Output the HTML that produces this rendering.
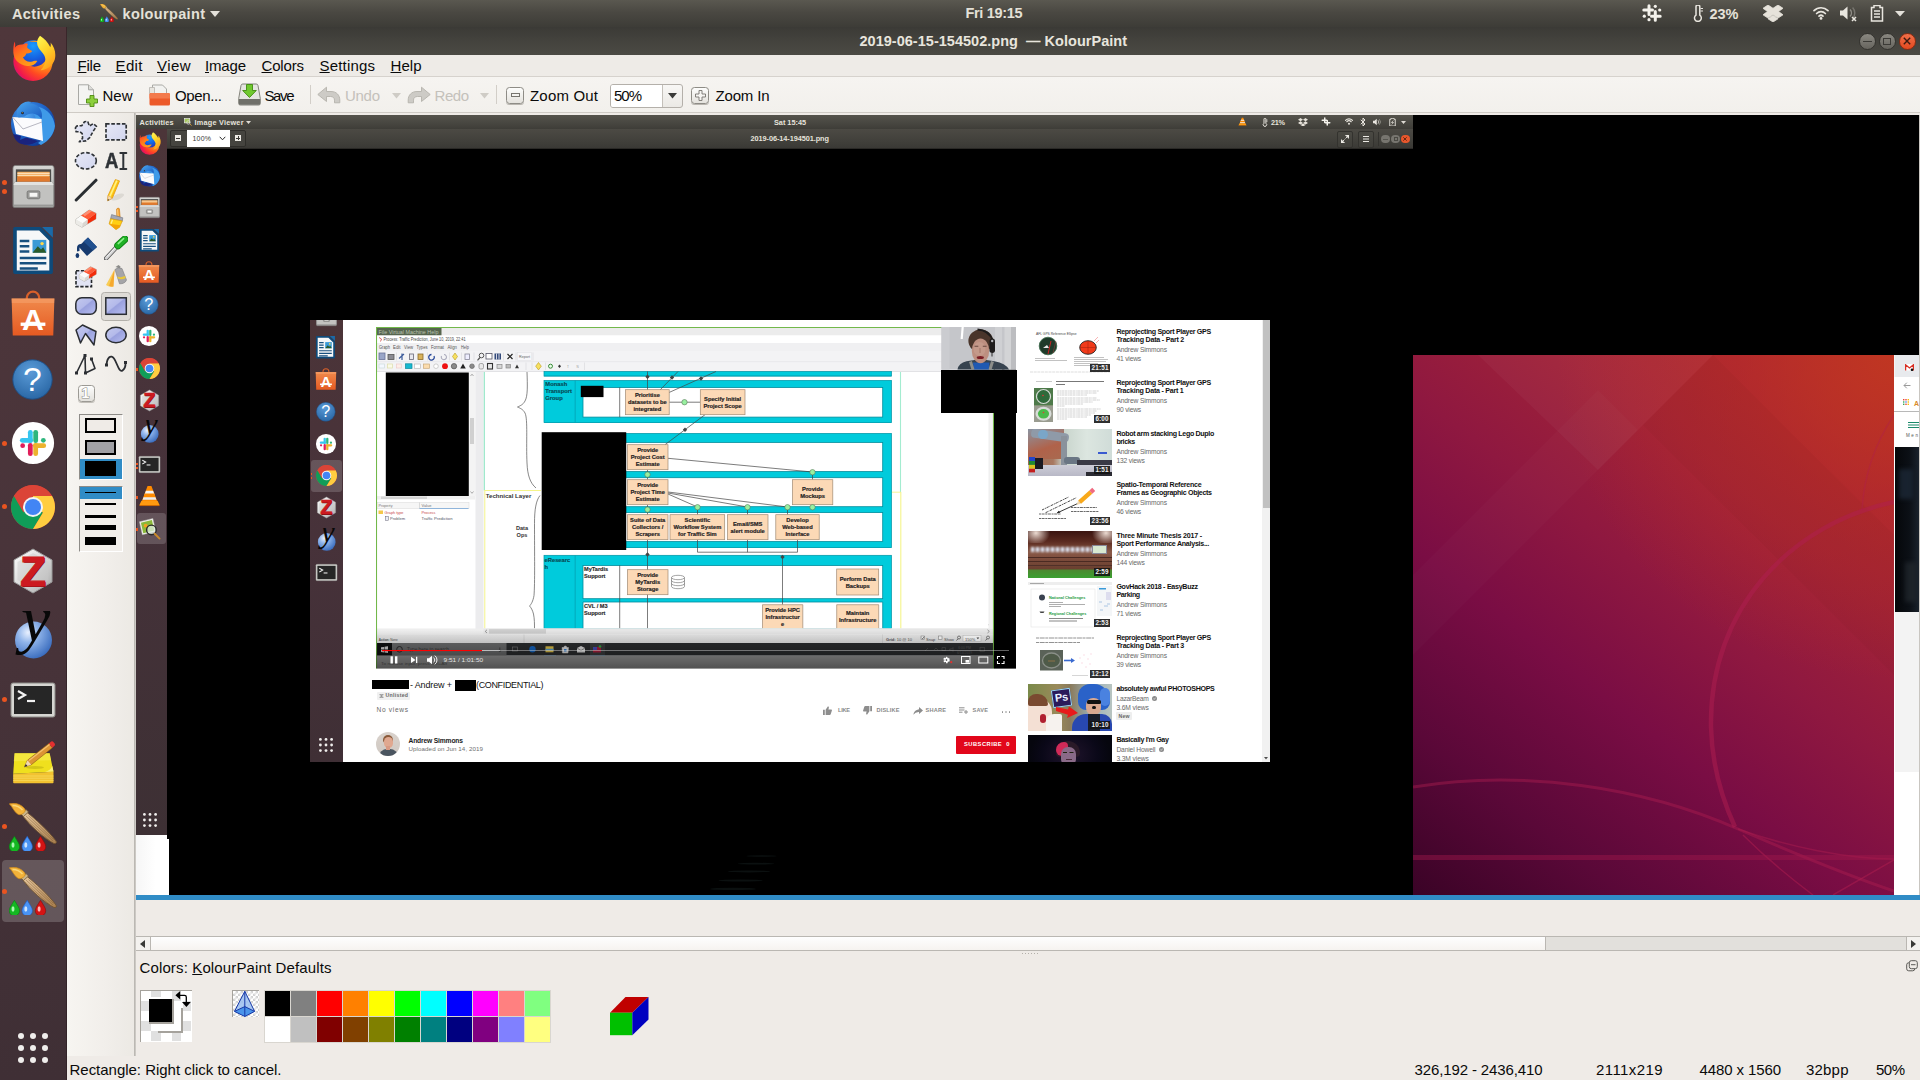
<!DOCTYPE html>
<html lang="en"><head><meta charset="utf-8"><title>2019-06-15-154502.png — KolourPaint</title>
<style>
html,body{margin:0;padding:0;width:1920px;height:1080px;overflow:hidden;background:#efebe7;font-family:"Liberation Sans",sans-serif;}
*{box-sizing:border-box}
.a,.t,svg.i{position:absolute}
.t{white-space:pre;font-family:"Liberation Sans",sans-serif}
.sf{font-family:"Liberation Serif",serif}
u{text-decoration:underline;text-underline-offset:1px}
#topbar{left:0;top:0;width:1920px;height:27px;background:linear-gradient(#5a5850,#4a4842 45%,#3d3c37)}
#dock{left:0;top:27px;width:67px;height:1053px;background:linear-gradient(#4f373b,#49343a 50%,#3f2f35);border-right:1px solid rgba(40,26,30,.55)}
#titlebar{left:67px;top:27px;width:1853px;height:28px;background:linear-gradient(#3b3a36,#42413c 40%,#4b4a44)}
#menubar{left:67px;top:55px;width:1853px;height:22px;background:#eeebe7;border-bottom:1px solid #d6d2cd}
#toolbar{left:67px;top:77px;width:1853px;height:36px;background:linear-gradient(#f6f4f1,#f2f0ec);border-bottom:1px solid #cfcbc5}
#toolbox{left:67px;top:113px;width:67px;height:943px;background:linear-gradient(90deg,#f7f5f1,#f1eeea 60%,#ece9e4)}
#canvas{left:136px;top:115px;width:1784px;height:780px;background:#000;overflow:hidden}
#canvas .a,#canvas .t,#canvas svg.i{position:absolute}
</style></head><body>
<!-- GNOME top bar -->
<div class="a" id="topbar"></div>
<span class="t" style="left:12px;top:7.03px;font-size:14.5px;line-height:14.5px;color:#e4e1d8;font-weight:bold;letter-spacing:0.391px;">Activities</span>
<svg class="i" style="left:99.500px;top:4px" width="18" height="18"><use href="#ic-kp"/></svg>
<span class="t" style="left:122.5px;top:7.03px;font-size:14.5px;line-height:14.5px;color:#e4e1d8;font-weight:bold;letter-spacing:0.355px;">kolourpaint</span>
<svg class="i" style="left:210px;top:11px" width="10" height="6" viewBox="0 0 10 6"><path d="M0 0h10L5 6z" fill="#e4e1da"/></svg>
<span class="t" style="left:965.5px;top:6.13px;font-size:14.5px;line-height:14.5px;color:#e4e1d8;font-weight:bold;letter-spacing:-0.332px;">Fri 19:15</span>
<!-- tray: slack -->
<svg class="i" style="left:1642px;top:4px" width="20" height="18" viewBox="0 0 20 18"><g fill="none" stroke="#f4f2ec" stroke-width="3" stroke-linecap="round"><path d="M7 1.800v8.700M13.300 7.500v8.700M1.800 6h8.700M9.500 12.200h8.700"/></g><g fill="#f4f2ec"><circle cx="13.300" cy="2.300" r="1.600"/><circle cx="7" cy="15.700" r="1.600"/><circle cx="2.300" cy="12.200" r="1.600"/><circle cx="17.700" cy="6" r="1.600"/></g></svg>
<!-- thermometer -->
<svg class="i" style="left:1692px;top:5px" width="12" height="17" viewBox="0 0 12 17"><path d="M4 1.8a1.9 1.9 0 0 1 3.8 0v8.3a3.4 3.4 0 1 1-3.8 0z" fill="none" stroke="#e9e6df" stroke-width="1.5"/><path d="M8.5 3.5h2.5M8.5 6h2.5" stroke="#e9e6df" stroke-width="1.2"/></svg>
<span class="t" style="left:1709.5px;top:7.13px;font-size:14.5px;line-height:14.5px;color:#e4e1d8;font-weight:bold;letter-spacing:-0.016px;">23%</span>
<!-- dropbox -->
<svg class="i" style="left:1763px;top:5px" width="20" height="17" viewBox="0 0 20 17"><path d="M5 0l5 3.300L15 0l5 3.300-4.500 3.200 4.500 3.300-5 3.300-5-3.300-5 3.300-5-3.300 4.500-3.300L0 3.300zM5 13.800l5-3.300 5 3.300-5 3.200z" fill="#e6e2da" stroke="#e6e2da" stroke-width=".800" stroke-linejoin="round"/></svg>
<!-- wifi -->
<svg class="i" style="left:1813px;top:6px" width="16" height="14" viewBox="0 0 16 14"><g fill="none" stroke="#e9e6df" stroke-width="1.7" stroke-linecap="round"><path d="M1 4.6a10 10 0 0 1 14 0"/><path d="M3.6 7.5a6.3 6.3 0 0 1 8.8 0"/><path d="M6 10.2a2.9 2.9 0 0 1 4 0"/></g><circle cx="8" cy="12.4" r="1.4" fill="#e9e6df"/></svg>
<!-- volume muted -->
<svg class="i" style="left:1840px;top:5px" width="18" height="17" viewBox="0 0 18 17"><path d="M0 5.5h3L7.5 1.5v13L3 10.5H0z" fill="#e9e6df"/><path d="M10 4.5a5 5 0 0 1 0 7" fill="none" stroke="#8f8d86" stroke-width="1.5"/><path d="M12.6 2.4a8 8 0 0 1 0 11" fill="none" stroke="#77756f" stroke-width="1.5"/><path d="M12 12l4 4M16 12l-4 4" stroke="#e9e6df" stroke-width="1.5"/></svg>
<!-- battery -->
<svg class="i" style="left:1870px;top:5px" width="14" height="17" viewBox="0 0 14 17"><path d="M4 .5h6v2h2.5v13.5h-11V2.5H4z" fill="none" stroke="#e9e6df" stroke-width="1.5"/><path d="M4 6h6M4 9h6M4 12h6" stroke="#e9e6df" stroke-width="1.6"/></svg>
<svg class="i" style="left:1895px;top:11px" width="10" height="6" viewBox="0 0 10 6"><path d="M0 0h10L5 5.5z" fill="#e4e1da"/></svg>

<!-- window title bar -->
<div class="a" id="titlebar"></div>
<span class="t" style="left:859.5px;top:34.03px;font-size:14.5px;line-height:14.5px;color:#e8e5dd;font-weight:bold;letter-spacing:0.021px;">2019-06-15-154502.png  — KolourPaint</span>
<div class="a" style="left:1858.500px;top:32.500px;width:17px;height:17px;border-radius:8.500px;background:linear-gradient(#8a8881,#66645e);border:1px solid #34332f"></div>
<div class="a" style="left:1862.5px;top:40.5px;width:9px;height:1.5px;background:#3b3a36"></div>
<div class="a" style="left:1878.500px;top:32.500px;width:17px;height:17px;border-radius:8.500px;background:linear-gradient(#8a8881,#66645e);border:1px solid #34332f"></div>
<div class="a" style="left:1883px;top:37.5px;width:8px;height:7px;border:1.3px solid #3b3a36"></div>
<div class="a" style="left:1898.500px;top:32.500px;width:17px;height:17px;border-radius:8.500px;background:linear-gradient(#f0704a,#e3491f);border:1px solid #8a2c12"></div>
<svg class="i" style="left:1903px;top:37px" width="8" height="8" viewBox="0 0 8 8"><path d="M.8.8l6.4 6.4M7.2.8L.8 7.2" stroke="#3c1a10" stroke-width="1.4"/></svg>

<!-- menubar -->
<div class="a" id="menubar"></div>
<span class="t" style="left:77.5px;top:57.80px;font-size:15px;line-height:15px;color:#0a0a0a;letter-spacing:-0.229px;"><u>F</u>ile</span>
<span class="t" style="left:115.5px;top:57.80px;font-size:15px;line-height:15px;color:#0a0a0a;letter-spacing:0.380px;"><u>E</u>dit</span>
<span class="t" style="left:157px;top:57.80px;font-size:15px;line-height:15px;color:#0a0a0a;letter-spacing:0.417px;"><u>V</u>iew</span>
<span class="t" style="left:205px;top:57.80px;font-size:15px;line-height:15px;color:#0a0a0a;letter-spacing:-0.176px;"><u>I</u>mage</span>
<span class="t" style="left:261.5px;top:57.80px;font-size:15px;line-height:15px;color:#0a0a0a;letter-spacing:-0.172px;"><u>C</u>olors</span>
<span class="t" style="left:319.5px;top:57.80px;font-size:15px;line-height:15px;color:#0a0a0a;letter-spacing:0.183px;"><u>S</u>ettings</span>
<span class="t" style="left:390.5px;top:57.80px;font-size:15px;line-height:15px;color:#0a0a0a;letter-spacing:0.042px;"><u>H</u>elp</span>

<!-- toolbar -->
<div class="a" id="toolbar"></div>
<!-- New -->
<svg class="i" style="left:77px;top:84px" width="22" height="23" viewBox="0 0 22 23"><path d="M1.5 .8h10l5 5V20.5h-15z" fill="#f4f4f2" stroke="#a9a9a5"/><path d="M11.5 .8v5h5" fill="#dcdcd8" stroke="#a9a9a5"/><path d="M13 11.5h4v3.5h3.5v4H17V22.5h-4V19H9.5v-4H13z" fill="#8ccf3c" stroke="#4e8a12" stroke-width=".9"/></svg>
<span class="t" style="left:102.5px;top:88.30px;font-size:15px;line-height:15px;color:#0a0a0a;letter-spacing:-0.008px;">New</span>
<!-- Open -->
<svg class="i" style="left:147px;top:84px" width="24" height="23" viewBox="0 0 24 23"><path d="M5.5 1h10l4 4v10h-14z" fill="#f2f2f0" stroke="#a9a9a5"/><path d="M2.5 3.5h5v6h-5z" fill="#e8e6e0" stroke="#b5b3ad" stroke-width=".8"/><path d="M2.5 10.5q0-1.5 1.5-1.5h17.5q1.500 0 1.500 1.500v9.500q0 1.500-1.500 1.500H4q-1.500 0-1.500-1.500z" fill="#ec5a2a"/><path d="M2.5 10.5q0-1.500 1.500-1.500h17.500q1.500 0 1.500 1.500v4H2.5z" fill="#f37a4c"/></svg>
<span class="t" style="left:175px;top:88.30px;font-size:15px;line-height:15px;color:#0a0a0a;letter-spacing:-0.367px;">Open...</span>
<!-- Save -->
<svg class="i" style="left:238px;top:83px" width="23" height="24" viewBox="0 0 23 24"><path d="M3 2.500q.3-1.500 1.800-1.500h13.400q1.500 0 1.800 1.500l2.300 13v5q0 1.500-1.500 1.500H2.200q-1.500 0-1.500-1.500v-5z" fill="#e4e4e0" stroke="#77776f" stroke-width=".9"/><path d="M.9 16h21.200v4.500q0 1.300-1.300 1.300H2.200q-1.300 0-1.300-1.300z" fill="#6f6f69"/><path d="M8.500 1.500h6v6h3.800l-6.800 7-6.800-7h3.800z" fill="#6fc82e" stroke="#3f8a10" stroke-width=".9"/></svg>
<span class="t" style="left:264.5px;top:88.30px;font-size:15px;line-height:15px;color:#0a0a0a;letter-spacing:-1.401px;">Save</span>
<div class="a" style="left:309.500px;top:85px;width:1px;height:19px;background:#d2cec8"></div>
<!-- Undo (disabled) -->
<svg class="i" style="left:317px;top:86px" width="24" height="18" viewBox="0 0 24 18"><path d="M.800 8.500L9.500 1.200v4.300h4.500c5.500 0 8.800 3.700 8.800 8.500v2.800h-5.300v-2.600c0-2.300-1.500-3.700-4-3.700H9.500v5z" fill="#cdcbc6" stroke="#b4b2ac" stroke-width=".900" stroke-linejoin="round"/></svg>
<span class="t" style="left:345px;top:88.30px;font-size:15px;line-height:15px;color:#c4c1bb;letter-spacing:-0.286px;">Undo</span>
<svg class="i" style="left:392px;top:93px" width="9" height="6" viewBox="0 0 9 6"><path d="M0 0h9L4.500 5.500z" fill="#cfccc6"/></svg>
<svg class="i" style="left:407px;top:86px" width="24" height="18" viewBox="0 0 24 18"><path d="M23.200 8.500L14.500 1.200v4.300H10c-5.500 0-8.800 3.700-8.800 8.500v2.800h5.300v-2.600c0-2.300 1.500-3.700 4-3.700h4v5z" fill="#cdcbc6" stroke="#b4b2ac" stroke-width=".900" stroke-linejoin="round"/></svg>
<span class="t" style="left:434.5px;top:88.30px;font-size:15px;line-height:15px;color:#c4c1bb;letter-spacing:-0.453px;">Redo</span>
<svg class="i" style="left:480px;top:93px" width="9" height="6" viewBox="0 0 9 6"><path d="M0 0h9L4.500 5.500z" fill="#cfccc6"/></svg>
<div class="a" style="left:496px;top:85px;width:1px;height:19px;background:#d2cec8"></div>
<!-- Zoom out -->
<div class="a" style="left:506px;top:86.500px;width:18px;height:17.500px;border:1px solid #8e8c86;border-radius:3.500px;background:linear-gradient(#fdfdfc,#e4e2dd);box-shadow:0 1px 0 #b9b6b0"></div>
<div class="a" style="left:510.500px;top:93px;width:9px;height:4px;border:1px solid #77756f;background:#f4f3f0"></div>
<span class="t" style="left:530px;top:88.30px;font-size:15px;line-height:15px;color:#0a0a0a;letter-spacing:0.188px;">Zoom Out</span>
<div class="a" style="left:609.500px;top:83.500px;width:73.500px;height:24.500px;border:1px solid #b4b0aa;border-radius:3px;background:linear-gradient(#f8f7f5,#ebe9e5)"></div>
<div class="a" style="left:610.500px;top:84.500px;width:52px;height:22.500px;background:#fff;border-right:1px solid #c4c0ba;border-radius:2px 0 0 2px"></div>
<span class="t" style="left:614px;top:88.30px;font-size:15px;line-height:15px;color:#0a0a0a;letter-spacing:-1.016px;">50%</span>
<svg class="i" style="left:668px;top:93px" width="9" height="6" viewBox="0 0 9 6"><path d="M0 0h9L4.500 5.500z" fill="#3a3a38"/></svg>
<!-- Zoom in -->
<div class="a" style="left:691px;top:86.500px;width:18px;height:17.500px;border:1px solid #8e8c86;border-radius:3.500px;background:linear-gradient(#fdfdfc,#e4e2dd);box-shadow:0 1px 0 #b9b6b0"></div>
<svg class="i" style="left:694.500px;top:89.500px" width="11" height="11" viewBox="0 0 11 11"><path d="M4 .500h3v3.500h3.500v3H7v3.500H4V7H.500V4H4z" fill="#f6f5f2" stroke="#77756f" stroke-width=".9"/></svg>
<span class="t" style="left:715.5px;top:88.30px;font-size:15px;line-height:15px;color:#0a0a0a;letter-spacing:-0.172px;">Zoom In</span>
<!-- icon symbols -->
<svg width="0" height="0" style="position:absolute"><defs>
<radialGradient id="gFf" cx=".85" cy=".25" r="1.05"><stop offset="0" stop-color="#ffd22a"/><stop offset=".35" stop-color="#ff9a16"/><stop offset=".6" stop-color="#ff4a22"/><stop offset=".82" stop-color="#f0184e"/><stop offset="1" stop-color="#b8109a"/></radialGradient>
<linearGradient id="gFt" x1=".2" y1="0" x2=".7" y2="1"><stop offset="0" stop-color="#fff44f"/><stop offset=".45" stop-color="#ffd42a"/><stop offset="1" stop-color="#ff9a1a"/></linearGradient><linearGradient id="gFh" x1=".1" y1="0" x2=".8" y2="1"><stop offset="0" stop-color="#ff3a2a"/><stop offset=".45" stop-color="#ff7a1a"/><stop offset="1" stop-color="#ffa21a"/></linearGradient><radialGradient id="gFb" cx=".5" cy=".2" r=".9"><stop offset="0" stop-color="#1a9cff"/><stop offset=".5" stop-color="#1560e0"/><stop offset="1" stop-color="#3a1a9a"/></radialGradient>
<radialGradient id="gTb" cx=".35" cy=".3" r=".8"><stop offset="0" stop-color="#4fa4f0"/><stop offset=".55" stop-color="#1f64c8"/><stop offset="1" stop-color="#0a2f8a"/></radialGradient>
<linearGradient id="gTh" x1="0" y1="0" x2="1" y2="1"><stop offset="0" stop-color="#4aa8f0"/><stop offset="1" stop-color="#1a5ac0"/></linearGradient><linearGradient id="gGr" x1="0" y1="0" x2="0" y2="1"><stop offset="0" stop-color="#d6d6d4"/><stop offset="1" stop-color="#a2a2a0"/></linearGradient>
<linearGradient id="gBag" x1="0" y1="0" x2="0" y2="1"><stop offset="0" stop-color="#f08a4c"/><stop offset="1" stop-color="#e55a22"/></linearGradient>
<radialGradient id="gHelp" cx=".45" cy=".3" r=".8"><stop offset="0" stop-color="#5a9bd8"/><stop offset="1" stop-color="#24619f"/></radialGradient>
<radialGradient id="gSph" cx=".35" cy=".3" r=".8"><stop offset="0" stop-color="#e8f0ff"/><stop offset=".35" stop-color="#8fb4ea"/><stop offset="1" stop-color="#2f63b8"/></radialGradient>
<linearGradient id="gHex" x1="0" y1="0" x2="1" y2="1"><stop offset="0" stop-color="#ffffff"/><stop offset=".5" stop-color="#d9d9d9"/><stop offset="1" stop-color="#a9a9a9"/></linearGradient>
<linearGradient id="gBr" x1="0" y1="0" x2="1" y2="1"><stop offset="0" stop-color="#e9c9a0"/><stop offset="1" stop-color="#a77c4c"/></linearGradient>
<symbol id="ic-firefox" viewBox="0 0 48 48"><circle cx="24" cy="20" r="15" fill="url(#gFb)"/><path fill-rule="evenodd" d="M24 6.500a20.500 20.500 0 1 0 0 41 20.500 20.500 0 1 0 0-41zM25.500 5.500a13.500 13.500 0 1 1 0 27 13.500 13.500 0 1 1 0-27z" fill="url(#gFf)"/><path d="M31.300 .300c-3.500 4-4 8.500-1.500 12.500 2.500 4 6.500 6.500 7 11.500.500 4.500-1.500 9-5 12 7-.500 13-5 15-11.500 1.500-6.500-.500-13-4.500-17.500.500 2 .300 3.500-.200 5-2.500-5-6.500-9.500-10.800-12z" fill="url(#gFt)"/><path d="M4.700 6.200c1 2.500 1 4.500.300 6.500 2-2.500 5.500-3.700 9-3 1.500-1 3.300-1.300 5-1-.800 1.200-1.200 2.500-1 4 1.500 1.500 3.500 2.500 5.200 3.500-1 1.800-3.200 2.800-6.200 2.600-.500 2-1.500 3.200-3.500 4 1.500 3.500 5 5 8.500 4.500 2.500-.500 4.500-1.500 6.500-.800-2 3.800-6 5.800-10.500 5.300C10 31 4 25.500 3.500 18c-.200-4 .200-8 1.200-11.800z" fill="url(#gFh)"/></symbol>
<symbol id="ic-tbird" viewBox="0 0 48 48"><circle cx="24" cy="25" r="22" fill="url(#gTb)"/><path d="M30 8c8 2 15 9 16 19-1 8-6 15-14 19l-3-2 4-3-3-1 3-4-3 0 2-5-3 1 2-6-3 2 1-6-2 2c0-5-1-9-5-12 4-3 7-4 8-4z" fill="#3f9ae8"/><path d="M3.500 18l29 2 1.500 22-27-7z" fill="#fbfbfd"/><path d="M3.500 18l10.500 12 19-7" fill="none" stroke="#9a9aa8" stroke-width=".700"/><path d="M8.500 10c3-6 9-9 14-7l-2 1.500c5 0 9 2.500 11 6 1.500 3 2 6 1 9.500-2-3-5-5-9-5.500-3 0-6 1-8 3l-6 1c-2-3-2-6-1-8.500z" fill="url(#gTh)"/><circle cx="13.500" cy="14" r="1.300" fill="#1a1a2a"/><circle cx="13.300" cy="13.700" r=".500" fill="#e8c860"/><path d="M4 35l8 2-1 4 6-2.500 12 3.500c-5 4-13 5-19 2-3-2-5-5-6-9z" fill="#1a237e"/></symbol>
<symbol id="ic-files" viewBox="0 0 48 48"><path d="M3 5q0-2.500 2.500-2.500h37q2.500 0 2.500 2.500V44q0 1.500-1.500 1.500h-39Q3 45.500 3 44z" fill="url(#gGr)" stroke="#7a7a78" stroke-width=".800"/><rect x="6" y="6.500" width="36" height="13" fill="#4a4a48"/><path d="M7.500 9h33v10.500h-33z" fill="#f0a04a"/><path d="M7.500 10.500h33M7.500 12.500h33" stroke="#fff0d8" stroke-width="1.200"/><path d="M7.500 14h33v5.500h-33z" fill="#e07a2e"/><path d="M5 19.500h38l1.500 3v20.500h-41v-20.500z" fill="#c2c2c0" stroke="#8a8a88" stroke-width=".800"/><path d="M5 19.500h38l1.500 3h-41z" fill="#e2e2e0"/><rect x="17.500" y="28.500" width="13" height="8" rx="1.500" fill="#9a9a98" stroke="#6e6e6c" stroke-width=".800"/><rect x="20" y="30.500" width="8" height="4" fill="#f6f6f4"/></symbol>
<symbol id="ic-writer" viewBox="0 0 48 48"><path d="M7.500 3.500h23.500l10.500 10.500v30.500H7.500z" fill="#f6f7f8" stroke="#0e4a7a" stroke-width="3.400" stroke-linejoin="round"/><path d="M33 1.800l10.200 10.200V1.800z" fill="#1a6aa8"/><path d="M12 15h9M12 20h9M12 25h9M12 31h25M12 36h25M12 41h17" stroke="#17507f" stroke-width="2.400"/><rect x="24" y="14" width="13" height="12" fill="#3a9ad6"/><path d="M24 26l5-6 3 3 2-2 3 5z" fill="#2a5a2a"/><circle cx="33" cy="17.500" r="1.600" fill="#ffd84a"/></symbol>
<symbol id="ic-soft" viewBox="0 0 48 48"><path d="M18.500 12v-1.500a5.500 5.500 0 0 1 11 0V12" fill="none" stroke="#d8602a" stroke-width="2"/><path d="M5 11h38l-1 33H6z" fill="url(#gBag)"/><path d="M5 11h38l-.2 4H5.200z" fill="#f5a06a" opacity=".6"/><text x="24" y="39" text-anchor="middle" font-family="Liberation Sans,sans-serif" font-weight="bold" font-size="27" fill="#fff">A</text><path d="M13 34h22" stroke="#fff" stroke-width="3"/></symbol>
<symbol id="ic-help" viewBox="0 0 48 48"><circle cx="24" cy="24" r="21" fill="url(#gHelp)" stroke="#1d4f86" stroke-width="1"/><text x="24" y="36" text-anchor="middle" font-family="Liberation Sans,sans-serif" font-size="36" fill="#fff">?</text></symbol>
<symbol id="ic-slack" viewBox="0 0 48 48"><circle cx="24" cy="24" r="22" fill="#fff"/><g transform="translate(24 24) scale(.8) translate(-24 -24)"><g stroke-width="6.200" stroke-linecap="round" fill="none"><path d="M20.500 10v11" stroke="#36c5f0"/><path d="M10 20.500h10.500" stroke="#36c5f0" opacity="0"/><path d="M27.500 10v11" stroke="#2eb67d"/><path d="M27 27.500h11" stroke="#ecb22e"/><path d="M27.500 27v11" stroke="#ecb22e" opacity="0"/><path d="M10 27.500h11" stroke="#e01e5a" opacity="0"/><path d="M20.500 27v11" stroke="#e01e5a"/><path d="M10 20.500h11" stroke="#36c5f0"/><path d="M27.500 38v-11" stroke="#ecb22e"/><path d="M10.500 27.500h0" stroke="#e01e5a"/><path d="M37.500 20.500h0" stroke="#2eb67d"/><path d="M20.500 27.500h-3" stroke="#e01e5a" opacity="0"/></g><path d="M27 18h11a2.500 2.500 0 0 1 0 5H27z" fill="#2eb67d" opacity="0"/></g></symbol>
<symbol id="ic-chrome" viewBox="0 0 48 48"><circle cx="24" cy="24" r="22" fill="#db4437"/><path d="M24 24L4.950 13A22 22 0 0 0 24 46l10-16.500z" fill="#0f9d58"/><path d="M24 24l10 5.500L24 46a22 22 0 0 0 19.050-33H24z" fill="#ffcd40"/><path d="M24 13h19.050A22 22 0 0 0 4.950 13l9.500 16.500z" fill="#db4437"/><circle cx="24" cy="24" r="10" fill="#f4f4f4"/><circle cx="24" cy="24" r="8" fill="#4285f4"/></symbol>
<symbol id="ic-zotero" viewBox="0 0 48 48"><path d="M24 2l19 11v22L24 46 5 35V13z" fill="url(#gHex)" stroke="#9a9a9a" stroke-width="1"/><path d="M24 6l15.500 9v18L24 42 8.500 33V15z" fill="#c9c9c9" opacity=".45"/><text x="25" y="39.500" text-anchor="middle" font-family="Liberation Sans,sans-serif" font-weight="bold" font-size="42" fill="#7a0c10">Z</text><text x="24" y="38.500" text-anchor="middle" font-family="Liberation Sans,sans-serif" font-weight="bold" font-size="42" fill="#cc1a20" stroke="#cc1a20" stroke-width="1.200">Z</text></symbol>
<symbol id="ic-yacas" viewBox="0 0 48 48"><circle cx="24.500" cy="29" r="18.500" fill="url(#gSph)"/><text x="12" y="30" font-family="Liberation Serif,serif" font-style="italic" font-size="66" fill="#080808">y</text></symbol>
<symbol id="ic-term" viewBox="0 0 48 48"><rect x="2" y="7" width="44" height="34" rx="2" fill="#d6d6d2" stroke="#8a8a86"/><rect x="5" y="10" width="38" height="28" fill="#262626"/><path d="M9 15l7 4-7 4" fill="none" stroke="#f2f2f2" stroke-width="2.200"/><path d="M18 25h8" stroke="#f2f2f2" stroke-width="2.200"/></symbol>
<symbol id="ic-notes" viewBox="0 0 48 48"><path d="M4.200 33.800l40.300-2V42.500q0 .800-.800 .800H5q-.800 0-.800-.800z" fill="#f2c230"/><path d="M4.200 36h40.300M4.200 38.200h40.300M4.200 40.400h40.300" stroke="#f8dc60" stroke-width=".800"/><path d="M5.600 13.300h35l3.900 18.500-40.300 2z" fill="#efe01e"/><path d="M5.600 13.300h35l1.500 7-37.300 1z" fill="#f6ea4a" opacity=".7"/><path d="M36 31.800l8.500-.300-1.200-5.500c-1.500 3.500-4 5-7.300 5.800z" fill="#f8ee80"/><ellipse cx="26" cy="27.500" rx="9" ry="1.500" fill="#b8a810" opacity=".5"/><path d="M15.300 27l3.200-6.800L39.800 3.500l3.600 4.300-21.200 17z" fill="#dc9434" stroke="#8a5a14" stroke-width=".600"/><path d="M20 20.500L41.500 3.800" stroke="#f4c070" stroke-width="1.200"/><path d="M39.800 3.500l2.400-1.900q1.200-.700 2.200 .400l1.300 1.600q.800 1.200-.200 2.200l-2.100 2z" fill="#e23030"/><path d="M15.300 27l3.200-6.800 3.700 4.600z" fill="#f0d8b0"/><path d="M15.300 27l1.500-3 1.700 2.100z" fill="#2a2a2a"/></symbol>
<symbol id="ic-kp" viewBox="0 0 48 48"><path d="M13.500 12.500l4-3.500c9 7 22 19 29.500 29 1 1.500 0 3-2 2.500C36 36 21 23 13.500 12.500z" fill="url(#gBr)" stroke="#6e5230" stroke-width=".900"/><path d="M17 13l27 25M16 15l25 23M19.500 12.500l25 24" stroke="#7c5e34" stroke-width=".600" opacity=".75"/><path d="M12 11l5-4.500 2.500 2.500-5 4.500z" fill="#c9b48a" stroke="#6e5230" stroke-width=".700"/><path d="M.300 .800c5-1.500 11 0 15 4.500 1.500 2 1 3.500-1 5-2 1.500-4 2-6 .500C5 8.500 3.500 4 .300 .800z" fill="#f2b23a" stroke="#c8861a" stroke-width=".700"/><path d="M3.500 2.500c3.500 0 7.500 1.500 10 4.500" stroke="#fbd878" stroke-width="1.400" fill="none"/><g stroke-width=".600"><path d="M5.400 33.300c3 5 5.200 7.500 5.200 10.500a5.200 5.200 0 0 1-10.400 0c0-3 2.200-5.500 5.200-10.500z" fill="#14b822" stroke="#0a7a12"/><path d="M18.200 33.300c3 5 5.200 7.500 5.200 10.500a5.200 5.200 0 0 1-10.400 0c0-3 2.200-5.500 5.200-10.500z" fill="#4a94f4" stroke="#1a5ac8"/><path d="M31.500 33.300c3 5 5.200 7.500 5.200 10.500a5.200 5.200 0 0 1-10.400 0c0-3 2.200-5.500 5.200-10.500z" fill="#d41414" stroke="#8a0a0a"/></g><ellipse cx="4" cy="42" rx="1.500" ry="2.800" fill="#b8ffc0" opacity=".9"/><ellipse cx="16.800" cy="42" rx="1.500" ry="2.800" fill="#dcecff" opacity=".9"/><ellipse cx="30.100" cy="42" rx="1.500" ry="2.800" fill="#ffc8c8" opacity=".9"/></symbol>
<symbol id="ic-vlc" viewBox="0 0 48 48"><path d="M20 4h8l12 32H8z" fill="#ff8a00"/><path d="M16.500 14h15l3 8h-21z" fill="#f4f4f4"/><path d="M12 26h24l2.500 7h-29z" fill="#f4f4f4" opacity="0"/><path d="M14.500 20l-2.600 7h24.200l-2.600-7z" fill="#ff8a00"/><path d="M11.500 27.500h25l2 5.500h-29z" fill="#ececec"/><path d="M3 44l4-9h34l4 9z" fill="#ff9a10"/><path d="M3 44h42v2H3z" fill="#d96f00"/></symbol>
<symbol id="ic-eog" viewBox="0 0 48 48"><path d="M3 10l28-7 6 27-28 7z" fill="#f4f4f0" stroke="#b8b8b0"/><path d="M6 12l23-6 5 22-23 6z" fill="#8ab83a"/><circle cx="16" cy="18" r="4" fill="#f4a020"/><circle cx="28" cy="27" r="10" fill="#dfeee0" fill-opacity=".75" stroke="#2a2a2a" stroke-width="3"/><path d="M35 35l10 10" stroke="#c98a2a" stroke-width="4" stroke-linecap="round"/></symbol>
<symbol id="ic-grid" viewBox="0 0 30 30"><g fill="#f0eeec"><circle cx="3" cy="3" r="3"/><circle cx="15" cy="3" r="3"/><circle cx="27" cy="3" r="3"/><circle cx="3" cy="15" r="3"/><circle cx="15" cy="15" r="3"/><circle cx="27" cy="15" r="3"/><circle cx="3" cy="27" r="3"/><circle cx="15" cy="27" r="3"/><circle cx="27" cy="27" r="3"/></g></symbol>
</defs></svg>
<!-- Ubuntu dock -->
<div class="a" id="dock"></div>
<div class="a" style="left:2px;top:860px;width:62px;height:61.500px;border-radius:4px;background:rgba(255,255,255,.185)"></div>
<svg class="i" style="left:10px;top:35px" width="46" height="47"><use href="#ic-firefox"/></svg>
<svg class="i" style="left:9px;top:98.500px" width="48" height="48"><use href="#ic-tbird"/></svg>
<svg class="i" style="left:9.500px;top:163px" width="47" height="47"><use href="#ic-files"/></svg>
<svg class="i" style="left:6.800px;top:225.100px" width="51" height="51"><use href="#ic-writer"/></svg>
<svg class="i" style="left:6.200px;top:286.200px" width="54" height="54"><use href="#ic-soft"/></svg>
<svg class="i" style="left:10.200px;top:357.200px" width="45" height="45"><use href="#ic-help"/></svg>
<svg class="i" style="left:10px;top:420px" width="46" height="46"><use href="#ic-slack"/></svg>
<svg class="i" style="left:9px;top:483px" width="48" height="48"><use href="#ic-chrome"/></svg>
<svg class="i" style="left:9px;top:547px" width="48" height="48"><use href="#ic-zotero"/></svg>
<svg class="i" style="left:9px;top:611px" width="48" height="48"><use href="#ic-yacas"/></svg>
<svg class="i" style="left:9px;top:676px" width="48" height="48"><use href="#ic-term"/></svg>
<svg class="i" style="left:9px;top:740px" width="48" height="48"><use href="#ic-notes"/></svg>
<svg class="i" style="left:9px;top:803px" width="48" height="48"><use href="#ic-kp"/></svg>
<svg class="i" style="left:9px;top:867px" width="48" height="48"><use href="#ic-kp"/></svg>
<svg class="i" style="left:18px;top:1033px" width="30" height="30"><use href="#ic-grid"/></svg>
<!-- running dots -->
<div class="a" style="left:2.400px;top:180px;width:5px;height:5px;border-radius:3px;background:#e95420"></div>
<div class="a" style="left:2.400px;top:189px;width:5px;height:5px;border-radius:3px;background:#e95420"></div>
<div class="a" style="left:2.400px;top:440.500px;width:5px;height:5px;border-radius:3px;background:#e95420"></div>
<div class="a" style="left:2.400px;top:503.500px;width:5px;height:5px;border-radius:3px;background:#e95420"></div>
<div class="a" style="left:2.400px;top:696.500px;width:5px;height:5px;border-radius:3px;background:#e95420"></div>
<div class="a" style="left:2.400px;top:824.400px;width:5px;height:5px;border-radius:3px;background:#e95420"></div>
<div class="a" style="left:2.400px;top:888.500px;width:5px;height:5px;border-radius:3px;background:#e95420"></div>
<!-- tool box -->
<div class="a" id="toolbox"></div>
<div class="a" style="left:134px;top:113px;width:2px;height:943px;background:linear-gradient(90deg,#b3b0ab,#d4d1cc)"></div>
<svg width="0" height="0" style="position:absolute"><defs><linearGradient id="gSh" x1="0" y1="0" x2="1" y2="1"><stop offset="0" stop-color="#c4c9ee"/><stop offset=".45" stop-color="#b4baea"/><stop offset=".5" stop-color="#9aa1de"/><stop offset="1" stop-color="#b9bff0"/></linearGradient><linearGradient id="gSel" x1="0" y1="0" x2="1" y2="1"><stop offset="0" stop-color="#e6e8f6"/><stop offset="1" stop-color="#d2d6ee"/></linearGradient></defs></svg>
<div class="a" style="left:100.800px;top:292.300px;width:30px;height:28.600px;border:1px solid #b3b0aa;border-radius:3.500px;background:#dedbd6"></div>
<!-- r1 -->
<svg class="i" style="left:74px;top:120px" width="24" height="24" viewBox="0 0 24 24"><path d="M1.400 7.900L2.700 6l5.200-.400L10.500 1.700l3.200-.300L15.400 6l3.800-2.300 3.300 2.600-3.600 5.500-3.200 5.800-3.900 3.300-6.500 .900 3.300-3.500-.400-4.600L6 11.800H2.100z" fill="url(#gSel)" stroke="#2e3236" stroke-width="1.600" stroke-dasharray="3.600 1.600" stroke-linejoin="round"/></svg>
<svg class="i" style="left:104px;top:121px" width="24" height="22" viewBox="0 0 24 22"><rect x="2" y="2.800" width="20.200" height="16" fill="url(#gSel)" stroke="#2e3236" stroke-width="1.700" stroke-dasharray="3.600 1.700"/></svg>
<!-- r2 -->
<svg class="i" style="left:74px;top:150px" width="24" height="22" viewBox="0 0 24 22"><ellipse cx="11.900" cy="10.800" rx="10.400" ry="8.200" fill="url(#gSel)" stroke="#2e3236" stroke-width="1.600" stroke-dasharray="3.600 1.900"/></svg>
<span class="t" style="left:104.600px;top:150.700px;font-size:21.500px;line-height:21.500px;font-weight:bold;color:#2e3236;-webkit-text-stroke:.500px #2e3236;transform:scaleX(.860);transform-origin:0 0">A</span>
<svg class="i" style="left:119px;top:151px" width="10" height="20" viewBox="0 0 10 20"><path d="M1.300 1.900h6M1.300 18h6M4.300 1.900V18" stroke="#2e3236" stroke-width="2" fill="none" stroke-linecap="round"/></svg>
<!-- r3 -->
<svg class="i" style="left:74px;top:178px" width="24" height="24" viewBox="0 0 24 24"><path d="M2.200 22L22 2.200" stroke="#2a2e32" stroke-width="3" stroke-linecap="round"/></svg>
<svg class="i" style="left:104px;top:178px" width="24" height="24" viewBox="0 0 24 24"><ellipse cx="13.500" cy="19" rx="7" ry="2.600" fill="#dcd9d3" transform="rotate(-22 13.500 19)"/><path d="M11.300 1.600l4.200 1.300L8.300 20.200l-4.600 2.500.400-5.200z" fill="#ffd21a" stroke="#e39a12" stroke-width=".800" stroke-linejoin="round"/><path d="M12.800 2.600L5.600 19" stroke="#fff08a" stroke-width="1.500"/><path d="M14.600 3.600L7.500 20.300" stroke="#f4b016" stroke-width="1"/><path d="M4.100 17.500l4.200 2.700-4.600 2.500z" fill="#f6dcb2" stroke="#d89a4a" stroke-width=".500"/><path d="M3.850 21l1.500 1-1.650 .700z" fill="#333"/></svg>
<!-- r4 -->
<svg class="i" style="left:74px;top:207px" width="24" height="24" viewBox="0 0 24 24"><path d="M1.900 12.400L15.200 3l6.900 3.300-.200 5.600L8 20.200l-5.900-3.300z" fill="#e8e6e2" stroke="#a4a29c" stroke-width=".700" stroke-linejoin="round"/><path d="M7 8.800L15.200 3l6.900 3.300-8.400 6.200z" fill="#ff5a36"/><path d="M13.700 12.500l8.400-6.200-.200 5.600-8.600 5.100z" fill="#f22c0a"/><path d="M9 7.400l6.300-4.400 2.500 1.200-7 5z" fill="#ff9a80" opacity=".8"/><path d="M1.900 12.400L7 8.800l6.700 3.700-5.100 3.800z" fill="#fbfbfa"/><path d="M8.600 16.300l5.100-3.800-.400 4.500L8 20.200z" fill="#d9d7d2"/><path d="M1.900 12.400l6.700 3.900L8 20.200l-5.900-3.300z" fill="#ecebe7"/></svg>
<svg class="i" style="left:104px;top:207px" width="24" height="24" viewBox="0 0 24 24"><path d="M12.600 2q1.500-1.800 2.800-.300l.800 8.800-3.400-.500z" fill="#f5a030" stroke="#c87a12" stroke-width=".600"/><path d="M13.600 2.500l.500 7" stroke="#ffd080" stroke-width="1"/><path d="M7.600 7.600l11.200 3.200-.500 3.200L6.600 11.700z" fill="#a4a8b6" stroke="#70747e" stroke-width=".600"/><path d="M6.600 11.700l11.700 2.300-2.800 6.300-3.500 2.300-6.900-5.800z" fill="#ffcf12" stroke="#d99a0a" stroke-width=".700" stroke-linejoin="round"/><path d="M5.100 16.800l6.900 5.800 3.500-2.300.800-2z" fill="#f4a406"/><path d="M8.500 12.800l-1.500 4" stroke="#fff08a" stroke-width="1.300"/></svg>
<!-- r5 -->
<svg class="i" style="left:74px;top:236px" width="24" height="24" viewBox="0 0 24 24"><path d="M14 1.500L23 11 13 20 4.500 10.500z" fill="#173a6e"/><path d="M14 1.500L23 11l-4 3.600L9.500 5.500z" fill="#21508f"/><path d="M7 8C4.500 8 3 9.500 3 12v3.500l2.500-.5V12c0-1 .800-1.700 2-1.700z" fill="#173a6e"/><ellipse cx="3.400" cy="19.500" rx="1.800" ry="2.600" fill="#173a6e"/></svg>
<svg class="i" style="left:104px;top:236px" width="24" height="24" viewBox="0 0 24 24"><path d="M2 22.500L15.500 8" stroke="#5a5a5a" stroke-width="4.400" stroke-linecap="round"/><path d="M2.200 22.300L15.500 8" stroke="#d4d4d4" stroke-width="2.800" stroke-linecap="round"/><path d="M3 20.500L14.500 8.200" stroke="#f4f4f4" stroke-width="1" stroke-linecap="round"/><path d="M14 9.500L20.800 3.200" stroke="#0c7a10" stroke-width="7.400" stroke-linecap="round"/><path d="M14 9.500L20.800 3.200" stroke="#1fb024" stroke-width="5.800" stroke-linecap="round"/><path d="M14.200 7.600L19.600 2.600" stroke="#8cf08a" stroke-width="1.500" stroke-linecap="round"/></svg>
<!-- r6 -->
<svg class="i" style="left:74px;top:265px" width="24" height="24" viewBox="0 0 24 24"><rect x="2" y="5.800" width="15.500" height="15.800" fill="#e2e4f4" stroke="#24272b" stroke-width="1.600" stroke-dasharray="3.300 1.600"/><g transform="translate(3.600 -.850) scale(.850)"><path d="M1.900 12.400L15.200 3l6.900 3.300-.200 5.600L8 20.200l-5.900-3.300z" fill="#e8e6e2" stroke="#a4a29c" stroke-width=".700" stroke-linejoin="round"/><path d="M7 8.800L15.200 3l6.900 3.300-8.400 6.200z" fill="#ff5a36"/><path d="M13.700 12.500l8.400-6.200-.200 5.600-8.600 5.100z" fill="#f22c0a"/><path d="M9 7.400l6.300-4.400 2.500 1.200-7 5z" fill="#ff9a80" opacity=".8"/><path d="M1.900 12.400L7 8.800l6.700 3.700-5.100 3.800z" fill="#fbfbfa"/><path d="M8.600 16.300l5.100-3.800-.400 4.500L8 20.200z" fill="#d9d7d2"/><path d="M1.900 12.400l6.700 3.900L8 20.200l-5.900-3.300z" fill="#ecebe7"/></g></svg>
<svg class="i" style="left:104px;top:264px" width="24" height="24" viewBox="0 0 24 24"><path d="M10.500 5.500L2 21q3 2.500 7.500 1.500z" fill="#f9c63a" opacity=".85"/><path d="M10.500 5.500L5 22q2.500 1 4.500.500z" fill="#f59a1e" opacity=".7"/><path d="M11.500 3l3-2 2 1.500-.5 2z" fill="#8c8c8a"/><path d="M11 5.500q3-3 7-1l4.500 11.500q-1.500 4-7 3.800z" fill="#a5a5a8" stroke="#7c7c7e" stroke-width=".600"/><path d="M13 12.500q4 1.500 8-.500l.800 2q-4 2-8 .600z" fill="#e9c83a"/></svg>
<!-- r7 -->
<svg class="i" style="left:74px;top:295px" width="24" height="22" viewBox="0 0 24 22"><rect x="1.800" y="2.800" width="20.500" height="16.500" rx="6" fill="url(#gSh)" stroke="#2b2e33" stroke-width="1.500"/></svg>
<svg class="i" style="left:104px;top:295px" width="24" height="22" viewBox="0 0 24 22"><rect x="1.800" y="2.800" width="20.500" height="16.500" fill="url(#gSh)" stroke="#2b2e33" stroke-width="1.500"/></svg>
<!-- r8 -->
<svg class="i" style="left:74px;top:323px" width="24" height="24" viewBox="0 0 24 24"><path d="M2 7l6.500-5L22 8.500 20 22l-8.500-11.500L6.500 20z" fill="url(#gSh)" stroke="#2b2e33" stroke-width="1.500" stroke-linejoin="round"/></svg>
<svg class="i" style="left:104px;top:324px" width="24" height="22" viewBox="0 0 24 22"><ellipse cx="12" cy="11" rx="10.200" ry="7.800" fill="url(#gSh)" stroke="#2b2e33" stroke-width="1.500"/></svg>
<!-- r9 -->
<svg class="i" style="left:74px;top:352px" width="24" height="24" viewBox="0 0 24 24"><path d="M2.500 21L11 3.500l.500 17.500L21 16.500 17.500 7" fill="none" stroke="#2b2e33" stroke-width="1.600" stroke-linejoin="round"/><g fill="#2b2e33"><rect x="1" y="19.500" width="3" height="3"/><rect x="9.500" y="2" width="3" height="3"/><rect x="10" y="19.500" width="3" height="3"/><rect x="16" y="5.500" width="3" height="3"/></g></svg>
<svg class="i" style="left:104px;top:353px" width="24" height="22" viewBox="0 0 24 22"><path d="M2.500 12.500C3 4 7 1.500 10 5.500S15 20 18.500 17.500 21.500 10 21.500 9.500" fill="none" stroke="#2b2e33" stroke-width="1.800"/><rect x="1" y="10.500" width="3" height="3" fill="#2b2e33"/><rect x="20" y="8" width="3" height="3" fill="#2b2e33"/></svg>
<!-- "1" zoom-original -->
<div class="a" style="left:77.500px;top:384.500px;width:17.500px;height:17px;border:1px solid #9c9a94;border-radius:3.500px;background:linear-gradient(#fefefd,#e3e1dc);box-shadow:0 1px 0 #c2bfb9"></div>
<span class="t" style="left:81.500px;top:386px;font-size:14px;line-height:14px;font-weight:bold;color:#fff;-webkit-text-stroke:1.100px #8e8c86;paint-order:stroke fill">1</span>
<!-- option widget 1: fill style -->
<div class="a" style="left:79px;top:414px;width:43.500px;height:66px;background:#f1eeea;border:1px solid;border-color:#8e8c88 #fff #fff #8e8c88"></div>
<div class="a" style="left:85px;top:418px;width:31px;height:15px;border:2px solid #000;background:#efebe7"></div>
<div class="a" style="left:85px;top:440px;width:31px;height:15px;border:2px solid #000;background:#a0a0a4"></div>
<div class="a" style="left:80px;top:459px;width:42px;height:20px;background:#308cc6"></div>
<div class="a" style="left:85px;top:461px;width:31px;height:15px;background:#000"></div>
<!-- option widget 2: line width -->
<div class="a" style="left:79px;top:486px;width:43.500px;height:66px;background:#f1eeea;border:1px solid;border-color:#8e8c88 #fff #fff #8e8c88"></div>
<div class="a" style="left:80px;top:487px;width:42px;height:12px;background:#308cc6"></div>
<div class="a" style="left:85px;top:492px;width:31px;height:1px;background:#000"></div>
<div class="a" style="left:85px;top:503px;width:31px;height:2px;background:#000"></div>
<div class="a" style="left:85px;top:515px;width:31px;height:3px;background:#000"></div>
<div class="a" style="left:85px;top:525px;width:31px;height:5px;background:#000"></div>
<div class="a" style="left:85px;top:537px;width:31px;height:8px;background:#000"></div>
<!-- canvas: the image being edited (shown at 50%) -->
<div class="a" id="canvas"><div class="a" id="cv" style="left:-136px;top:-115px;width:1920px;height:1080px">
<!-- inner GNOME top bar -->
<div class="a" style="left:136px;top:115px;width:1277px;height:14px;background:linear-gradient(#55534c,#3e3d38)"></div>
<span class="t" style="left:139.5px;top:118.82px;font-size:7.3px;line-height:7.3px;color:#e6e3dc;font-weight:bold;letter-spacing:0.172px;">Activities</span>
<svg class="i" style="left:183.500px;top:117.500px" width="8" height="8" viewBox="0 0 9 9"><rect x=".500" y=".500" width="6" height="5" fill="#a5c85a" stroke="#eee" stroke-width=".700"/><circle cx="5" cy="5" r="2" fill="none" stroke="#ddd" stroke-width=".800"/><path d="M6.500 6.500L8.500 8.500" stroke="#d9a03a" stroke-width="1"/></svg>
<span class="t" style="left:194.5px;top:118.82px;font-size:7.3px;line-height:7.3px;color:#e6e3dc;font-weight:bold;letter-spacing:0.226px;">Image Viewer</span>
<svg class="i" style="left:246px;top:120.500px" width="5" height="3" viewBox="0 0 5 3"><path d="M0 0h5L2.500 3z" fill="#dedbd4"/></svg>
<span class="t" style="left:774px;top:118.82px;font-size:7.3px;line-height:7.3px;color:#e6e3dc;font-weight:bold;letter-spacing:-0.006px;">Sat 15:45</span>
<svg class="i" style="left:1238px;top:117px" width="9" height="9"><use href="#ic-vlc"/></svg>
<svg class="i" style="left:1261.500px;top:117.500px" width="6" height="9" viewBox="0 0 12 17"><path d="M4 1.800a1.900 1.900 0 0 1 3.800 0v8.300a3.400 3.400 0 1 1-3.800 0z" fill="none" stroke="#e9e6df" stroke-width="2"/><path d="M8.500 3.500h2.500M8.500 6h2.500" stroke="#e9e6df" stroke-width="1.600"/></svg>
<span class="t" style="left:1271px;top:118.82px;font-size:7.3px;line-height:7.3px;color:#e6e3dc;font-weight:bold;letter-spacing:-0.305px;">21%</span>
<svg class="i" style="left:1297.500px;top:117.500px" width="10" height="8.500" viewBox="0 0 20 17"><path d="M5 0l5 3.300L5 6.600 0 3.300zM15 0l5 3.300-5 3.300-5-3.300zM0 9.800l5-3.200 5 3.200-5 3.300zM15 6.600l5 3.200-5 3.300-5-3.300zM5 14l5-3.200 5 3.200-5 3z" fill="#e6e2da"/></svg>
<svg class="i" style="left:1320.500px;top:117px" width="10" height="9" viewBox="0 0 20 18"><g fill="none" stroke="#f4f2ec" stroke-width="3" stroke-linecap="round"><path d="M7.500 2v9M12.500 7v9M2.500 6.500h9M8.500 11.500h9"/></g></svg>
<svg class="i" style="left:1345px;top:118px" width="8" height="7" viewBox="0 0 16 14"><g fill="none" stroke="#e9e6df" stroke-width="2.200" stroke-linecap="round"><path d="M1 4.600a10 10 0 0 1 14 0"/><path d="M3.600 7.500a6.300 6.300 0 0 1 8.800 0"/></g><circle cx="8" cy="11.500" r="2" fill="#e9e6df"/></svg>
<svg class="i" style="left:1360px;top:117px" width="6" height="10" viewBox="0 0 6 10"><path d="M.800 2.800L5 7 3 9V1l2 2L.800 7.200" fill="none" stroke="#e9e6df" stroke-width="1"/></svg>
<svg class="i" style="left:1373px;top:117.500px" width="9" height="8.500" viewBox="0 0 18 17"><path d="M0 5.500h3L7.500 1.500v13L3 10.500H0z" fill="#e9e6df"/><path d="M10 4.500a5 5 0 0 1 0 7" fill="none" stroke="#cfccc5" stroke-width="1.800"/><path d="M12.600 2.400a8 8 0 0 1 0 11" fill="none" stroke="#8f8d86" stroke-width="1.800"/></svg>
<svg class="i" style="left:1388.500px;top:117.500px" width="7" height="8.500" viewBox="0 0 14 17"><path d="M4 .5h6v2h2.500v13.500h-11V2.500H4z" fill="none" stroke="#e9e6df" stroke-width="1.800"/><path d="M8.500 5L5 9h4l-3.500 4" fill="none" stroke="#e9e6df" stroke-width="1.500"/></svg>
<svg class="i" style="left:1400.500px;top:121px" width="5" height="3" viewBox="0 0 5 3"><path d="M0 0h5L2.500 3z" fill="#dedbd4"/></svg>
<!-- inner eog header bar -->
<div class="a" style="left:167px;top:129px;width:1246px;height:20px;background:linear-gradient(#4c4a44,#403f3a 70%,#3a3935);border-bottom:1px solid #2a2926"></div>
<div class="a" style="left:170.300px;top:129.800px;width:75.500px;height:17.200px;border:1px solid #2f2e2a;border-radius:2px;background:#45443f"></div>
<div class="a" style="left:187px;top:129.800px;width:43px;height:17.200px;background:#fff"></div>
<div class="a" style="left:175.200px;top:135.300px;width:6px;height:6px;background:#eceae4"></div><div class="a" style="left:176.200px;top:137.800px;width:4px;height:1px;background:#3a3935"></div>
<div class="a" style="left:235px;top:135.300px;width:6px;height:6px;background:#eceae4"></div><div class="a" style="left:236px;top:137.800px;width:4px;height:1px;background:#3a3935"></div><div class="a" style="left:237.500px;top:136.300px;width:1px;height:4px;background:#3a3935"></div>
<span class="t" style="left:192.5px;top:134.87px;font-size:7px;line-height:7px;color:#3a3a3a;letter-spacing:0.198px;">100%</span>
<svg class="i" style="left:218.500px;top:135.800px" width="7" height="5" viewBox="0 0 7 5"><path d="M.700 .800L3.500 3.800 6.300 .800" fill="none" stroke="#2a2a2a" stroke-width="1"/></svg>
<span class="t" style="left:750.5px;top:135.32px;font-size:7.3px;line-height:7.3px;color:#e6e3dc;font-weight:bold;letter-spacing:-0.051px;">2019-06-14-194501.png</span>
<div class="a" style="left:1336.500px;top:130.500px;width:16px;height:17px;border:1px solid #33322e;border-radius:2px;background:linear-gradient(#4a4943,#403f3a)"></div>
<svg class="i" style="left:1340.500px;top:135px" width="8" height="8" viewBox="0 0 8 8"><path d="M4.500 0H8v3.500zM0 4.500L3.500 8H0zM7.500 .500l-3 3M.500 7.500l3-3" fill="#eceae4" stroke="#eceae4" stroke-width=".900"/></svg>
<div class="a" style="left:1357.500px;top:130.500px;width:16px;height:17px;border:1px solid #33322e;border-radius:2px;background:linear-gradient(#4a4943,#403f3a)"></div>
<div class="a" style="left:1362.500px;top:135.500px;width:6px;height:1px;background:#eceae4;box-shadow:0 2.500px #eceae4,0 5px #eceae4"></div>
<div class="a" style="left:1377.500px;top:132px;width:1px;height:14px;background:#33322e"></div>
<div class="a" style="left:1381px;top:134.500px;width:8.500px;height:8.500px;border-radius:5px;background:#77756f"></div><div class="a" style="left:1383px;top:138.500px;width:4.500px;height:1px;background:#55544e"></div>
<div class="a" style="left:1391px;top:134.500px;width:8.500px;height:8.500px;border-radius:5px;background:#77756f"></div><div class="a" style="left:1393.500px;top:137px;width:4px;height:3.500px;border:1px solid #4a4943"></div>
<div class="a" style="left:1401px;top:134.500px;width:8.500px;height:8.500px;border-radius:5px;background:#e8572c"></div><svg class="i" style="left:1403.250px;top:136.750px" width="4" height="4" viewBox="0 0 4 4"><path d="M.300 .300l3.400 3.400M3.700 .300L.300 3.700" stroke="#46190c" stroke-width=".800"/></svg>
<!-- inner dock -->
<div class="a" style="left:136px;top:129px;width:31px;height:706px;background:linear-gradient(#4c3539,#46323a 50%,#3d3034)"></div>
<div class="a" style="left:137px;top:513px;width:29px;height:31px;border-radius:3px;background:rgba(255,255,255,.17)"></div>
<svg class="i" style="left:137.7px;top:131.7px" width="23" height="23"><use href="#ic-firefox"/></svg>
<svg class="i" style="left:137.7px;top:163.7px" width="23" height="23"><use href="#ic-tbird"/></svg>
<svg class="i" style="left:137.7px;top:196.2px" width="23" height="23"><use href="#ic-files"/></svg>
<svg class="i" style="left:136.65px;top:227.77px" width="24.4" height="24.4"><use href="#ic-writer"/></svg>
<svg class="i" style="left:136.36px;top:258.88px" width="25.9" height="25.9"><use href="#ic-soft"/></svg>
<svg class="i" style="left:138.28px;top:293.75px" width="21.6" height="21.6"><use href="#ic-help"/></svg>
<svg class="i" style="left:138.2px;top:325.2px" width="22" height="22"><use href="#ic-slack"/></svg>
<svg class="i" style="left:137.7px;top:356.7px" width="23" height="23"><use href="#ic-chrome"/></svg>
<svg class="i" style="left:137.7px;top:388.7px" width="23" height="23"><use href="#ic-zotero"/></svg>
<svg class="i" style="left:137.7px;top:420.2px" width="23" height="23"><use href="#ic-yacas"/></svg>
<svg class="i" style="left:137.7px;top:452.7px" width="23" height="23"><use href="#ic-term"/></svg>
<svg class="i" style="left:137.7px;top:483.7px" width="23" height="23"><use href="#ic-vlc"/></svg>
<svg class="i" style="left:137.7px;top:516.7px" width="23" height="23"><use href="#ic-eog"/></svg>
<svg class="i" style="left:142.500px;top:812.500px" width="14" height="14"><use href="#ic-grid"/></svg>
<div class="a" style="left:136px;top:206px;width:1.500px;height:2px;background:#e95420;box-shadow:0 4px #e95420"></div>
<div class="a" style="left:136px;top:368px;width:1.500px;height:2.500px;background:#e95420"></div>
<div class="a" style="left:136px;top:463px;width:1.500px;height:2px;background:#e95420;box-shadow:0 4px #e95420"></div>
<div class="a" style="left:136px;top:496px;width:1.500px;height:2.500px;background:#e95420"></div>
<div class="a" style="left:136px;top:528px;width:1.500px;height:2.500px;background:#e95420"></div>
<!-- white strip lower-left -->
<div class="a" style="left:136px;top:835px;width:33px;height:60px;background:linear-gradient(90deg,#f6f6f6,#fcfcfc 40%,#fff 60%)"></div>
<div class="a" style="left:167px;top:835px;width:2px;height:4px;background:#000"></div>
<svg class="i" style="left:700px;top:850px" width="100" height="45" viewBox="700 850 100 45"><g fill="#0b1010"><ellipse cx="761.500" cy="856" rx="15" ry=".800"/><ellipse cx="756" cy="863.700" rx="18" ry=".900"/><ellipse cx="749" cy="871.400" rx="21" ry="1"/><ellipse cx="740.600" cy="880.500" rx="22" ry="1.100"/><ellipse cx="733" cy="888.900" rx="23" ry="1.200"/></g></svg>
<!-- second monitor: Ubuntu wallpaper -->
<div class="a" style="left:1413px;top:355px;width:481px;height:540px;overflow:hidden;background:
 radial-gradient(ellipse 70% 60% at 100% 0%,rgba(194,56,32,.85),rgba(190,46,36,.45) 45%,rgba(180,40,50,0) 100%),
 linear-gradient(38deg,#3a0326 0%,#5a0838 18%,#7a0d44 38%,#8f1840 55%,#a02238 72%,#b42c2c 100%)">
<svg class="i" style="left:0;top:0" width="481" height="540" viewBox="0 0 481 540"><path d="M65 0h235L185 115z" fill="#fff" opacity=".035"/><path d="M0 300L225 75l-40-40L0 220z" fill="#fff" opacity=".02"/><path d="M300 0L481 180v140L230 70z" fill="#000" opacity=".025"/>
<g fill="none" stroke="#b01e50" stroke-opacity=".42"><path d="M481 147C380 168 296 252 298 372c1 40 12 74 24 100" stroke-width="4.500" stroke-opacity=".5"/><path d="M0 432c110-18 230 0 325 42 60 26 120 50 156 62" stroke-width="3"/><path d="M325 474c50 18 110 30 156 30" stroke-width="1.500"/><path d="M481 60c-20 30-30 60-32 95" stroke-width="1.500" stroke-opacity=".35"/><path d="M330 480c20 20 50 45 70 60M420 540l61-35" stroke-width="1.500" stroke-opacity=".5"/></g>
<rect x="0" y="500" width="481" height="5" fill="#a0184c" opacity=".45"/></svg></div>
<!-- chrome window peeking in -->
<div class="a" style="left:1894px;top:355px;width:25px;height:540px;background:#fff"></div>
<div class="a" style="left:1894px;top:355px;width:25px;height:22px;background:#e8eaed;border-left:1px solid #f4f4f4"></div>
<svg class="i" style="left:1904.500px;top:364px" width="9" height="7" viewBox="0 0 9 7"><rect width="9" height="6.500" fill="#fff"/><path d="M.600 6.500V.800L4.500 4 8.400 .800V6.500" fill="none" stroke="#d93025" stroke-width="1.300"/><circle cx="7" cy="5.800" r="1.300" fill="#111"/></svg>
<svg class="i" style="left:1903px;top:382px" width="8" height="7" viewBox="0 0 8 7"><path d="M7.500 3.500H1M3.800 .700L1 3.500l2.800 2.800" fill="none" stroke="#9a9a9a" stroke-width="1"/></svg>
<svg class="i" style="left:1903px;top:399px" width="6" height="6" viewBox="0 0 6 6"><rect x="0" y="0" width="1.400" height="1.400" fill="#ea4335"/><rect x="2.300" y="0" width="1.400" height="1.400" fill="#ea4335"/><rect x="4.600" y="0" width="1.400" height="1.400" fill="#fbbc05"/><rect x="0" y="2.300" width="1.400" height="1.400" fill="#34a853"/><rect x="2.300" y="2.300" width="1.400" height="1.400" fill="#4285f4"/><rect x="4.600" y="2.300" width="1.400" height="1.400" fill="#fbbc05"/><rect x="0" y="4.600" width="1.400" height="1.400" fill="#34a853"/><rect x="2.300" y="4.600" width="1.400" height="1.400" fill="#ea4335"/><rect x="4.600" y="4.600" width="1.400" height="1.400" fill="#fbbc05"/></svg>
<span class="t" style="left:1914px;top:399.57px;font-size:7px;line-height:7px;color:#d98a2a;font-weight:bold;letter-spacing:1.938px;">A</span>
<div class="a" style="left:1894px;top:411px;width:25px;height:1px;background:#b8b8b8"></div>
<div class="a" style="left:1908px;top:422px;width:11px;height:1px;background:#1a8a6a;box-shadow:0 2.500px #1a8a6a,0 5px #1a8a6a"></div>
<span class="t" style="left:1906px;top:433.69px;font-size:4.5px;line-height:4.5px;color:#555;letter-spacing:1.578px;">Menu</span>
<div class="a" style="left:1894.500px;top:447px;width:24.500px;height:165px;background:linear-gradient(90deg,#05070a,#0c1016 60%,#1a222c);overflow:hidden"><div class="a" style="left:4px;top:22px;width:14px;height:30px;background:#1c2836;opacity:.8;filter:blur(2px)"></div><div class="a" style="left:10px;top:115px;width:12px;height:40px;background:#20262c;opacity:.8;filter:blur(2px)"></div></div>
<div class="a" style="left:1894.500px;top:612px;width:24.500px;height:160px;background:#f3f3f3"></div>
<div class="a" style="left:1919px;top:355px;width:1px;height:540px;background:#d8d8d8"></div>
<!-- eog image: 2019-06-14-194501.png shown at 100% -->
<div class="a" style="left:310px;top:320px;width:960px;height:442px;background:#fff"></div>
<!-- innermost dock -->
<div class="a" style="left:310px;top:320px;width:33px;height:442px;background:linear-gradient(#4b3438,#47323a 50%,#3f2f35)"></div>
<div class="a" style="left:311px;top:460px;width:31px;height:32px;border-radius:3px;background:rgba(255,255,255,.17)"></div>
<div class="a" style="left:310px;top:320px;width:33px;height:7px;overflow:hidden"><svg class="i" style="left:5px;top:-16px" width="23" height="23"><use href="#ic-files"/></svg></div>
<svg class="i" style="left:313.45px;top:335.07px" width="24.4" height="24.4"><use href="#ic-writer"/></svg>
<svg class="i" style="left:313.16px;top:365.68px" width="25.9" height="25.9"><use href="#ic-soft"/></svg>
<svg class="i" style="left:315.08px;top:401.05px" width="21.6" height="21.6"><use href="#ic-help"/></svg>
<svg class="i" style="left:315px;top:432.500px" width="22" height="22"><use href="#ic-slack"/></svg>
<svg class="i" style="left:314.500px;top:464px" width="23" height="23"><use href="#ic-chrome"/></svg>
<svg class="i" style="left:314.500px;top:496px" width="23" height="23"><use href="#ic-zotero"/></svg>
<svg class="i" style="left:314.500px;top:528px" width="23" height="23"><use href="#ic-yacas"/></svg>
<svg class="i" style="left:314.500px;top:560.500px" width="23" height="23"><use href="#ic-term"/></svg>
<svg class="i" style="left:319px;top:738px" width="14" height="14"><use href="#ic-grid"/></svg>
<div class="a" style="left:310.500px;top:472.500px;width:1.500px;height:2px;background:#e95420;box-shadow:0 4px #e95420"></div>
<!-- page scrollbar -->
<div class="a" style="left:1262px;top:320px;width:8px;height:442px;background:#f1f1f1"></div>
<div class="a" style="left:1262.500px;top:320px;width:7px;height:188px;background:#c1c1c1"></div>
<svg class="i" style="left:1264px;top:757px" width="4" height="3" viewBox="0 0 4 3"><path d="M0 0h4L2 2.500z" fill="#505050"/></svg>
<!-- video title row -->
<div class="a" style="left:371.500px;top:679.500px;width:37px;height:9.500px;background:#000"></div>
<span class="t" style="left:410px;top:680.58px;font-size:9px;line-height:9px;color:#111;letter-spacing:-0.142px;">- Andrew +</span>
<div class="a" style="left:454.500px;top:680px;width:21.500px;height:11px;background:#000"></div>
<span class="t" style="left:476px;top:680.58px;font-size:9px;line-height:9px;color:#111;letter-spacing:-0.346px;">(CONFIDENTIAL)</span>
<div class="a" style="left:376.500px;top:691.500px;width:33px;height:8px;background:#f0f0f0;border-radius:1px"></div>
<svg class="i" style="left:378.500px;top:693.500px" width="5" height="4" viewBox="0 0 5 4"><path d="M.500 .700h4M.500 3.300h4M1.500 .700L3.500 3.300M3.500 .700L1.500 3.300" stroke="#777" stroke-width=".700" fill="none"/></svg>
<span class="t" style="left:385.5px;top:692.90px;font-size:5.2px;line-height:5.2px;color:#666;font-weight:bold;letter-spacing:0.290px;">Unlisted</span>
<span class="t" style="left:376.5px;top:707.01px;font-size:6.6px;line-height:6.6px;color:#6a6a6a;letter-spacing:0.679px;">No views</span>
<!-- like / dislike / share / save -->
<svg class="i" style="left:823px;top:706px" width="9" height="9" viewBox="0 0 9 9"><path d="M0 3.800h1.800V9H0zM2.600 9V3.800L5 .300q1.200 .400 .800 1.700L5.400 3.400H8.300q.900 .200 .600 1.200L7.700 8.300Q7.400 9 6.700 9z" fill="#8d8d8d"/></svg>
<span class="t" style="left:838px;top:708.06px;font-size:5.6px;line-height:5.6px;color:#8a8a8a;font-weight:bold;letter-spacing:-0.250px;">LIKE</span>
<svg class="i" style="left:863px;top:706px" width="9" height="9" viewBox="0 0 9 9"><path d="M9 5.200H7.200V0H9zM6.400 0V5.200L4 8.700q-1.200-.400-.800-1.700L3.600 5.600H.700Q-.200 5.400 .100 4.400L1.300 .700Q1.600 0 2.300 0z" fill="#8d8d8d"/></svg>
<span class="t" style="left:876.5px;top:708.06px;font-size:5.6px;line-height:5.6px;color:#8a8a8a;font-weight:bold;letter-spacing:0.154px;">DISLIKE</span>
<svg class="i" style="left:912.500px;top:706.500px" width="10" height="8" viewBox="0 0 10 8"><path d="M6 0l4 3.500L6 7V5Q2.500 4.800 .300 7.800 1 3 6 2.200z" fill="#8d8d8d"/></svg>
<span class="t" style="left:925.5px;top:708.06px;font-size:5.6px;line-height:5.6px;color:#8a8a8a;font-weight:bold;letter-spacing:0.227px;">SHARE</span>
<svg class="i" style="left:959px;top:707px" width="9" height="7" viewBox="0 0 9 7"><path d="M0 .800h5.500M0 3h5.500M0 5.200h3.500M7 3v4M5 5h4" stroke="#8d8d8d" stroke-width="1" fill="none"/></svg>
<span class="t" style="left:972.5px;top:708.06px;font-size:5.6px;line-height:5.6px;color:#8a8a8a;font-weight:bold;letter-spacing:0.224px;">SAVE</span>
<div class="a" style="left:1001.500px;top:711px;width:1.500px;height:1.500px;border-radius:1px;background:#8d8d8d;box-shadow:3.500px 0 #8d8d8d,7px 0 #8d8d8d"></div>
<!-- channel row -->
<div class="a" style="left:376px;top:732px;width:24px;height:24px;border-radius:12px;overflow:hidden;background:linear-gradient(#d9d2cc,#cfc8c2)"><div class="a" style="left:7px;top:2.500px;width:10px;height:8px;border-radius:5px 5px 3px 3px;background:#8a5a3a"></div><div class="a" style="left:7.500px;top:5px;width:9px;height:11px;border-radius:4.500px;background:#e0a890"></div><div class="a" style="left:2.500px;top:16.500px;width:19px;height:10px;border-radius:8px 8px 0 0;background:#4a5560"></div><div class="a" style="left:10px;top:14px;width:4px;height:4px;background:#d89a84"></div></div>
<span class="t" style="left:408.5px;top:737.93px;font-size:6.7px;line-height:6.7px;color:#1a1a1a;font-weight:bold;letter-spacing:-0.153px;">Andrew Simmons</span>
<span class="t" style="left:408.5px;top:745.85px;font-size:6.2px;line-height:6.2px;color:#707070;letter-spacing:0.083px;">Uploaded on Jun 14, 2019</span>
<div class="a" style="left:956px;top:736px;width:60px;height:18px;background:#e2061a;border-radius:1px"></div>
<span class="t" style="left:964px;top:742.29px;font-size:5.8px;line-height:5.8px;color:#fff;font-weight:bold;letter-spacing:0.446px;">SUBSCRIBE  0</span>
<!-- video player frame -->
<div class="a" style="left:376px;top:327px;width:640px;height:341.500px;background:#fff;overflow:hidden"></div>
<svg class="i" style="left:376px;top:327px" width="640" height="341.500" viewBox="376 327 640 341.500" font-family="Liberation Sans,sans-serif">
<defs><linearGradient id="gCtl" x1="0" y1="0" x2="0" y2="1"><stop offset="0" stop-color="#000" stop-opacity="0"/><stop offset="1" stop-color="#000" stop-opacity=".5"/></linearGradient>
<g id="nd"><circle r="2.700" fill="#98f0a0" stroke="#5a7a5a" stroke-width=".600"/></g><g id="dk"><path d="M0 -2.200L2.200 0 0 2.200-2.200 0z" fill="#444"/></g></defs>
<!-- VM app chrome -->
<rect x="376" y="327" width="618" height="341.500" fill="#fff"/>
<rect x="377" y="328" width="616" height="7.500" fill="#ececec"/>
<rect x="376" y="328" width="65.500" height="7.500" fill="#56654e"/>
<text x="378.500" y="333.800" font-size="5" fill="#b9c2b2" textLength="60" lengthAdjust="spacingAndGlyphs">File  Virtual Machine  Help</text>
<rect x="377" y="335.500" width="616" height="7.500" fill="#fff"/>
<path d="M379 337.500l2.500 1.500-1 2.500" stroke="#c44" stroke-width=".800" fill="none"/>
<text x="383.500" y="341.300" font-size="5" fill="#444" textLength="82" lengthAdjust="spacingAndGlyphs">Process: Traffic Prediction, June 10, 2019, 22:41</text>
<rect x="377" y="343" width="616" height="8" fill="#f0f0f2"/>
<g font-size="4.800" fill="#555"><text x="379" y="349" textLength="11" lengthAdjust="spacingAndGlyphs">Graph</text><text x="393" y="349" textLength="7.500" lengthAdjust="spacingAndGlyphs">Edit</text><text x="404" y="349" textLength="9" lengthAdjust="spacingAndGlyphs">View</text><text x="416.500" y="349" textLength="11" lengthAdjust="spacingAndGlyphs">Types</text><text x="431" y="349" textLength="13" lengthAdjust="spacingAndGlyphs">Format</text><text x="447.500" y="349" textLength="9.500" lengthAdjust="spacingAndGlyphs">Align</text><text x="461" y="349" textLength="8" lengthAdjust="spacingAndGlyphs">Help</text></g>
<rect x="377" y="351" width="616" height="20.500" fill="#f3f3f5"/>
<rect x="377" y="361.500" width="616" height=".600" fill="#e2e2e6"/>
<rect x="377" y="371" width="616" height=".700" fill="#d8d8dc"/>
<!-- toolbar row 1 icons -->
<g stroke-width=".800" fill="none"><rect x="379" y="353" width="6" height="6.500" fill="#9aa6c8" stroke="#6a7398"/><rect x="388" y="354.500" width="6" height="5" fill="#8a8a92" stroke="#555"/><path d="M399 358.500l5-4.500M402 353.500v6.500" stroke="#3a5a9a" stroke-width="1.200"/><rect x="409.500" y="354" width="4" height="5.500" stroke="#667" fill="#e8e8ee"/><rect x="418" y="354" width="5" height="5.500" fill="#d9b25a" stroke="#8a6a2a"/><path d="M431.500 354.500a2.800 2.800 0 1 0 2.500 1.500" stroke="#2a4a9a" stroke-width="1.300"/><path d="M444 354.500a2.600 2.600 0 1 1-2.500 1.500" stroke="#aab" stroke-width="1.100"/><path d="M455 353l2.500 3.500-2.500 3.500-2.500-3.500z" fill="#f7e060" stroke="#b89a1a" stroke-width=".600"/><rect x="465" y="354" width="4.500" height="5.500" stroke="#889" fill="#eef"/><circle cx="481.500" cy="355.500" r="2.300" stroke="#555" stroke-width="1"/><path d="M480 357.500l-2.500 2.800" stroke="#555" stroke-width="1.200"/><rect x="486" y="353.500" width="6" height="5.500" stroke="#556" fill="#fff"/><rect x="494.500" y="353.500" width="6.500" height="6" fill="#334a7a"/><path d="M496.500 353.500v6M499 353.500v6" stroke="#e8e8f0" stroke-width=".900"/><path d="M507.500 354l5 5M512.500 354l-5 5" stroke="#222" stroke-width="1.200"/></g>
<rect x="517.500" y="352.500" width="14" height="8" fill="#f7f7f9" stroke="#e0e0e4" stroke-width=".500"/><text x="519" y="358.200" font-size="4.200" fill="#666" textLength="11" lengthAdjust="spacingAndGlyphs">Report</text>
<g stroke="#d6d6da" stroke-width=".600"><path d="M396.500 352.500v8M427.500 352.500v8M449.500 352.500v8M461.500 352.500v8M474 352.500v8M503.500 352.500v8M516 352.500v8M533 352.500v8"/></g>
<!-- toolbar row 2 icons -->
<g stroke-width=".700"><rect x="379" y="364" width="5.500" height="4" fill="#f4f8ff" stroke="#cdd"/><rect x="387.500" y="364" width="5" height="4" fill="#fafae8" stroke="#dda"/><rect x="396.500" y="364" width="5" height="4" fill="#fdeee8" stroke="#ecc"/><rect x="405.500" y="363.800" width="6.500" height="4.700" fill="#18b8d0" stroke="#0a8a9c"/><rect x="414.500" y="364" width="6" height="4.300" fill="#fff" stroke="#bbb"/><rect x="423.500" y="364" width="6" height="4.300" fill="#fbdcae" stroke="#c8a878"/><circle cx="436" cy="366.200" r="2.300" fill="#fff" stroke="#bbb"/><circle cx="445" cy="366.200" r="2.900" fill="#ee1010" stroke="none"/><circle cx="454" cy="366.200" r="2.700" fill="#8a8a8a" stroke="#555"/><path d="M463 368.500l-2.800 0 2.800-5 2.800 5z" fill="#222" stroke="none"/><circle cx="472" cy="366.200" r="2.300" fill="#8a8a8a" stroke="#666"/><rect x="479" y="363.500" width="4.500" height="5.500" rx="1.500" fill="#e8e8e8" stroke="#888"/><rect x="487.500" y="363.500" width="5" height="5.500" fill="#e8e8e8" stroke="#333" stroke-width="1.100"/><rect x="497" y="364.500" width="5" height="3.800" fill="#d8d8d8" stroke="#888"/><rect x="506" y="364.500" width="4.500" height="3.500" fill="#bbb" stroke="#888"/><path d="M517 368.300l-2 0 2-3.800 2 3.800z" fill="#333" stroke="none"/><path d="M538.500 362.500l2.800 3.700-2.800 3.700-2.800-3.700z" fill="#f7e060" stroke="#b89a1a" stroke-width=".600"/><circle cx="550.500" cy="366.200" r="2" fill="#e8ffe8" stroke="#3a8a3a" stroke-width="1"/><path d="M559.500 364.500l1.500 1.700-1.500 1.700-1.500-1.700z" fill="#333" stroke="none"/></g>
<g stroke="#d6d6da" stroke-width=".600"><path d="M526 362.500v7.500M532 362.500v7.500M545.500 362.500v7.500M584.500 362.500v7.500"/></g>
<text x="567" y="367.500" font-size="3" fill="#999">T</text><text x="576.500" y="367.500" font-size="3" fill="#999">N</text>
<!-- left panel -->
<rect x="469" y="372" width="6.500" height="124" fill="#f4f4f4"/><rect x="470" y="418" width="4" height="26" fill="#d0d0d0"/><path d="M470.500 376l1.500-1.800 1.500 1.800M470.500 491.500l1.500 1.800 1.500-1.800" stroke="#777" stroke-width=".600" fill="none"/>
<rect x="377" y="496" width="98" height="3.500" fill="#f0f0f0"/><rect x="381" y="496.500" width="46" height="2.500" fill="#d4d4d4"/>
<rect x="475.500" y="372" width="8" height="262" fill="#ececee"/>
<rect x="377" y="502.500" width="92" height="6" fill="#f6f6f6" stroke="#d8d8d8" stroke-width=".500"/><path d="M419.500 502.500v6" stroke="#c8c8c8" stroke-width=".600"/><rect x="419.500" y="508" width="49" height=".800" fill="#7aa8d8"/>
<g font-size="4.200"><text x="378.500" y="507.300" fill="#777" textLength="14" lengthAdjust="spacingAndGlyphs">Property</text><text x="421.500" y="507.300" fill="#777" textLength="10" lengthAdjust="spacingAndGlyphs">Value</text><text x="384.500" y="513.800" fill="#c8484a" textLength="19" lengthAdjust="spacingAndGlyphs">Graph type</text><text x="421.500" y="513.800" fill="#c8484a" textLength="14" lengthAdjust="spacingAndGlyphs">Process</text><text x="390" y="520" fill="#556" textLength="15" lengthAdjust="spacingAndGlyphs">Problem</text><text x="421.500" y="520" fill="#556" textLength="31" lengthAdjust="spacingAndGlyphs">Traffic Prediction</text></g>
<rect x="378.500" y="510.500" width="4.500" height="3.500" fill="#f4c84a"/><rect x="385.500" y="516.500" width="3" height="3.800" fill="#e8ecf8" stroke="#667" stroke-width=".500"/>
<rect x="385.800" y="372.500" width="83" height="123.500" fill="#000"/>
<!-- guide lines -->
<path d="M484.300 372v118.500" stroke="#8fe6c4" stroke-width="1.100"/><path d="M484.300 490.500h56.500M484.800 490.500V628.500" stroke="#f4f48a" stroke-width="1" fill="none"/>
<path d="M900.500 372v120" stroke="#a4ecd0" stroke-width="1.100"/><path d="M900.800 492V628.500" stroke="#f4f48a" stroke-width="1.100"/><path d="M892 492.200h9" stroke="#f4f48a" stroke-width=".900"/>
<!-- braces -->
<g fill="none" stroke="#555" stroke-width=".700"><path d="M527 372c.500 14 .800 24-2 29-2 4-5.500 5-7.500 6 2 1 5.500 2 7.500 6 3 6 1 30 2 50 .500 12 3 20 9 25"/><path d="M540 495.500c-4 5-5.500 14-5.500 28 0 30 .500 60-.500 72-1 6-3 9-4.500 10.500 1.500 1.500 3 4 4 8 1 5 1 10 1 14.500"/></g>
<text x="485.800" y="497.800" font-size="5.900" font-weight="bold" fill="#333" textLength="45.500" lengthAdjust="spacingAndGlyphs">Technical Layer</text>
<text x="522" y="530.200" font-size="5.600" font-weight="bold" fill="#333" text-anchor="middle">Data</text><text x="522" y="537.300" font-size="5.600" font-weight="bold" fill="#333" text-anchor="middle">Ops</text>
<!-- swimlanes -->
<g fill="#00cbdc" stroke="#0093a4" stroke-width=".700"><rect x="544" y="371.500" width="347.500" height="4.600"/><rect x="544" y="380.400" width="347.500" height="42.200"/><rect x="626" y="433.400" width="265.500" height="114.200"/><rect x="544" y="555.300" width="347.500" height="73.200"/></g>
<g fill="#00a7b8"><rect x="544" y="375.600" width="347.500" height=".700"/><rect x="544" y="422" width="347.500" height=".800"/><rect x="574.700" y="380.400" width=".900" height="42.200"/><rect x="574.700" y="555.300" width=".900" height="73.200"/><rect x="626" y="547" width="265.500" height=".800"/></g>
<g fill="#fff"><rect x="583" y="387.500" width="299.700" height="29.600"/><rect x="583" y="442.400" width="299.700" height="29.200"/><rect x="583" y="477.700" width="299.700" height="29"/><rect x="583" y="512.600" width="299.700" height="29"/><rect x="583" y="565.500" width="299.700" height="33.200"/><rect x="583" y="602" width="299.700" height="26.500"/></g>
<g fill="none" stroke="#008c9c" stroke-width=".800"><rect x="583" y="387.500" width="299.700" height="29.600"/><rect x="583" y="442.400" width="299.700" height="29.200"/><rect x="583" y="477.700" width="299.700" height="29"/><rect x="583" y="512.600" width="299.700" height="29"/><rect x="583" y="565.500" width="299.700" height="33.200"/><path d="M583 628.500V602h299.700v26.500"/></g>
<g font-size="5.800" font-weight="bold" fill="#074a55" stroke="#074a55" stroke-width=".150"><text x="545.300" y="386.200">Monash</text><text x="545.300" y="393.200">Transport</text><text x="545.300" y="400.200">Group</text><text x="544.500" y="561.500">eResearc</text><text x="544.500" y="568.500">h</text></g>
<g font-size="5.600" font-weight="bold" fill="#2a2a2a" stroke="#2a2a2a" stroke-width=".150"><text x="584" y="571">MyTardis</text><text x="584" y="578">Support</text><text x="584" y="608">CVL / M3</text><text x="584" y="615">Support</text></g>
<!-- connectors -->
<g stroke="#444" stroke-width=".700" fill="none"><path d="M619.700 387.500v29.600M619.700 565.500v63"/><path d="M647.500 371.500v18.500M678 371.500l-18 18.500M716 371.500l-47 21"/><path d="M669.200 402.200h31"/><path d="M705 414.700l-40 30"/><path d="M668 458.300l144.500 13.700M647.500 469.700v10M812.500 472v7.700"/><path d="M668 494l29.500 13M668 493l79.500 14M668 492l119.500 15"/><path d="M647.500 504.700v10M697.500 507v7.700M747.500 507v7.700M787.500 507v7.700M812.500 504.700v2.300"/><path d="M647.500 539.700v88.800M697.500 539.700v12.500h100v-12.500M747.500 539.700v12.500"/><path d="M782.500 557.500v47.200"/></g>
<use href="#dk" x="647.500" y="376.800"/><use href="#dk" x="672" y="377.500"/><use href="#dk" x="701" y="378.500"/><use href="#dk" x="685" y="429.800"/><use href="#dk" x="647.500" y="554.500"/><use href="#dk" x="782.500" y="557"/>
<!-- process boxes -->
<g fill="#fcd9b6" stroke="#a08a74" stroke-width=".700"><rect x="625.500" y="389.700" width="43.700" height="25"/><rect x="700.300" y="389.700" width="44.700" height="25"/><rect x="627.500" y="444.700" width="40.500" height="25"/><rect x="627.500" y="479.700" width="40.500" height="25"/><rect x="792.500" y="479.700" width="40.300" height="25"/><rect x="627.500" y="514.700" width="40.500" height="25"/><rect x="670" y="514.700" width="54.700" height="25"/><rect x="727.500" y="514.700" width="40.500" height="25"/><rect x="775.800" y="514.700" width="43.400" height="25"/><rect x="627.500" y="569.700" width="40.500" height="25"/><rect x="836.700" y="569" width="42" height="26"/><path d="M762.500 628.500v-23.800h40.300v23.800"/><path d="M836.700 628.500v-23.800h42v23.800"/></g>
<g font-size="5.750" font-weight="bold" fill="#24211e" stroke="#24211e" stroke-width=".180" text-anchor="middle">
<text x="647.400" y="397">Prioritise</text><text x="647.400" y="404">datasets to be</text><text x="647.400" y="411">integrated</text>
<text x="722.600" y="400.500">Specify Initial</text><text x="722.600" y="407.500">Project Scope</text>
<text x="647.700" y="452">Provide</text><text x="647.700" y="459">Project Cost</text><text x="647.700" y="466">Estimate</text>
<text x="647.700" y="487">Provide</text><text x="647.700" y="494">Project Time</text><text x="647.700" y="501">Estimate</text>
<text x="812.600" y="490.500">Provide</text><text x="812.600" y="497.500">Mockups</text>
<text x="647.700" y="522">Suite of Data</text><text x="647.700" y="529">Collectors /</text><text x="647.700" y="536">Scrapers</text>
<text x="697.400" y="522">Scientific</text><text x="697.400" y="529">Workflow System</text><text x="697.400" y="536">for Traffic Sim</text>
<text x="747.700" y="525.500">Email/SMS</text><text x="747.700" y="532.500">alert module</text>
<text x="797.500" y="522">Develop</text><text x="797.500" y="529">Web-based</text><text x="797.500" y="536">Interface</text>
<text x="647.700" y="577">Provide</text><text x="647.700" y="584">MyTardis</text><text x="647.700" y="591">Storage</text>
<text x="782.600" y="612">Provide HPC</text><text x="782.600" y="619">Infrastructur</text><text x="782.600" y="626">e</text>
<text x="857.700" y="580.500">Perform Data</text><text x="857.700" y="587.500">Backups</text>
<text x="857.700" y="615.300">Maintain</text><text x="857.700" y="622.300">Infrastructure</text></g>
<use href="#nd" x="684.500" y="402.200"/><use href="#nd" x="647.500" y="474.600"/><use href="#nd" x="812.500" y="472.200"/><use href="#nd" x="647.500" y="509.600"/><use href="#nd" x="697.500" y="507.200"/><use href="#nd" x="747.500" y="507.200"/><use href="#nd" x="787.500" y="507.200"/><use href="#nd" x="812.500" y="507.200"/>
<g fill="#fff" stroke="#666" stroke-width=".600"><path d="M671.500 577.500v9a6.500 2.200 0 0 0 13 0v-9"/><ellipse cx="678" cy="577.500" rx="6.500" ry="2.200"/><path d="M671.500 580.500a6.500 2.200 0 0 0 13 0M671.500 583.500a6.500 2.200 0 0 0 13 0" fill="none"/></g>
<!-- redaction boxes -->
<rect x="580.800" y="385.800" width="22.700" height="11.300" fill="#000"/><rect x="541.700" y="432.200" width="84.500" height="117.800" fill="#000"/>
<!-- app bottom: scrollbar + status -->
<rect x="377" y="628.500" width="616" height="5.700" fill="#eeeeee"/><rect x="483.500" y="628.500" width="509.500" height="5.700" fill="#e6e6e6"/><rect x="489" y="629.200" width="57" height="4.400" fill="#cdcdcd"/><path d="M487 629.800l-1.800 1.600 1.800 1.600M987.500 629.800l1.800 1.600-1.800 1.600M988.500 624.500l1.500 1.800 1.500-1.800" stroke="#666" stroke-width=".600" fill="none"/>
<rect x="884" y="372" width="8" height="0" fill="none"/>
<rect x="988.500" y="372" width="4.500" height="256.500" fill="#f0f0f0"/>
<rect x="377" y="634.200" width="616" height="8.800" fill="#e9e9e9"/><path d="M524 634.500v8.500M882.500 634.500v8.500" stroke="#cfcfcf" stroke-width=".600"/>
<text x="378.800" y="640.600" font-size="4.200" fill="#555" textLength="19" lengthAdjust="spacingAndGlyphs"><tspan font-weight="bold">Action:</tspan> None</text>
<text x="886" y="640.800" font-size="4" fill="#555" textLength="26" lengthAdjust="spacingAndGlyphs"><tspan font-weight="bold">Grid:</tspan> 10 @ 10</text>
<rect x="921" y="636" width="3.500" height="3.500" fill="#fff" stroke="#777" stroke-width=".500"/><path d="M921.700 637.800l1 1 1.500-2.300" stroke="#333" stroke-width=".600" fill="none"/><text x="926" y="640.800" font-size="4" fill="#555">Snap</text>
<rect x="938.500" y="636" width="3.500" height="3.500" fill="#fff" stroke="#777" stroke-width=".500"/><text x="944" y="640.800" font-size="4" fill="#555">Show</text>
<circle cx="959" cy="637.500" r="1.500" fill="none" stroke="#555" stroke-width=".700"/><path d="M958 638.800l-1.500 1.700" stroke="#555" stroke-width=".800"/><rect x="963" y="635.300" width="18" height="6.300" fill="#fff" stroke="#bbb" stroke-width=".500"/><text x="965" y="640.500" font-size="4" fill="#555">150%</text><path d="M976.500 637.500h2.800l-1.400 1.800z" fill="#444"/><circle cx="988" cy="637.500" r="1.500" fill="none" stroke="#555" stroke-width=".700"/><path d="M987 638.800l-1.500 1.700" stroke="#555" stroke-width=".800"/>
<!-- windows taskbar -->
<rect x="377" y="643" width="616" height="12.600" fill="#2c2e30"/><rect x="377" y="643" width="15" height="12.600" fill="#101112"/><path d="M381 647.300l3-.400v2.500h-3zM384.500 646.800l3.500-.500v3.100h-3.500zM381 649.900h3v2.500l-3-.400zM384.500 649.900h3.500v3.100l-3.500-.500z" fill="#d8d8d8"/>
<rect x="392" y="643" width="114.500" height="12.600" fill="#6e6f70"/><circle cx="399.500" cy="649.300" r="2.800" fill="none" stroke="#2a2a2a" stroke-width="1"/><text x="407" y="651" font-size="4.600" fill="#3c3c3c" textLength="42" lengthAdjust="spacingAndGlyphs">Type here to search</text><path d="M499.800 647.500v2.500M498.800 650.500a1 1 0 0 0 2 0" stroke="#333" stroke-width=".700" fill="none"/>
<rect x="590" y="643" width="15" height="12.600" fill="#3c3e40"/><rect x="590" y="655" width="15" height=".600" fill="#7ab0e0"/><rect x="544" y="655" width="12" height=".600" fill="#7ab0e0"/>
<rect x="512.500" y="647" width="5" height="4" fill="none" stroke="#777" stroke-width=".700"/><circle cx="532.500" cy="649.300" r="3.200" fill="#1468c8"/><rect x="545.500" y="646.300" width="8" height="6" fill="#e8c84a"/><rect x="545.500" y="648.800" width="8" height="1.500" fill="#58a8e0"/><path d="M562 647.500h6.500l-.500 5.500h-5.500zM563.800 647.500a1.500 1.500 0 0 1 3 0" fill="#e8e8e8" stroke="#ddd" stroke-width=".500"/><rect x="564" y="649" width="2.500" height="2.500" fill="#3a8ae0"/><path d="M577 648l4-2 4 2v4.500h-8z" fill="#e8e8e8"/><path d="M577 648l4 2.500 4-2.500" stroke="#555" stroke-width=".600" fill="none"/><rect x="593" y="647" width="8" height="5.500" fill="#b02040"/><rect x="593" y="647" width="4" height="3" fill="#4a50c0"/><circle cx="600" cy="646.500" r="1.300" fill="#30b040"/>
<g font-size="3.400" fill="#5a5a5a" text-anchor="middle"><text x="964.500" y="648.500">6:00 PM</text><text x="964.500" y="653.500">6/14/2019</text></g><path d="M925 651l3-3M934 650l2-2 2 2M942 647.500h3.500v3h-3.500zM949.500 649h2l1.500-1.500v4l-1.500-1.500h-2z" stroke="#555" stroke-width=".700" fill="none"/><rect x="980" y="647.300" width="4.500" height="4" fill="none" stroke="#555" stroke-width=".700"/>
<!-- vm status strip -->
<rect x="377" y="655.600" width="616" height="13" fill="#a2a2a2"/><text x="381" y="664.500" font-size="4.400" fill="#5c5c5c" textLength="66" lengthAdjust="spacingAndGlyphs">To release input, press Ctrl+Alt</text>
<!-- green VM border -->
<path d="M376.500 668.500V327.500H993.500V668.500" fill="none" stroke="#72b84a" stroke-width="1.100"/>
<!-- black right strip and webcam -->
<rect x="994" y="327" width="22" height="341.500" fill="#000"/>

<rect x="941.500" y="327" width="74.500" height="42.600" fill="#c5c6ca"/><rect x="995" y="327" width="7" height="42.600" fill="#cfd0d3"/><rect x="1004.500" y="327" width="6.500" height="42.600" fill="#d3d4d6"/><rect x="1011" y="327" width="5" height="42.600" fill="#bcbdc0"/><rect x="941.500" y="327" width="8" height="42.600" fill="#cbccd0"/>
<path d="M962.700 327l-1 12" stroke="#fff" stroke-width="2.200"/>
<path d="M957.500 369.600q1-6.500 9-8.300l8-1.300h12l8 1.300q11 1.800 14.500 8.300z" fill="#37434f"/><path d="M973 362.500h16.500l-.500 7.100h-15.500z" fill="#1f59b2"/><path d="M970.500 361.500l2.500 8.100M992.500 361.500l-2.500 8.100" stroke="#8c8e8a" stroke-width="3"/>
<ellipse cx="980.700" cy="341" rx="12.300" ry="11.500" fill="#4a352b"/>
<ellipse cx="980.500" cy="350.800" rx="8.700" ry="12.400" fill="#bd8f80"/>
<ellipse cx="979.500" cy="349" rx="6" ry="7" fill="#c89c8e" opacity=".7"/>
<path d="M970.500 346q-.500-9 4.500-11.500 6-2.500 12 0 4.500 2.500 3.500 9.500-2.500-5-6-6.300-5.500-1.200-10 2.300-2.500 2.500-4 6z" fill="#4a352b"/>
<path d="M977.500 329.500q11 .500 15.500 11" fill="none" stroke="#1e1c1c" stroke-width="1.800"/><rect x="989.500" y="338.500" width="5.500" height="14.500" rx="2.700" fill="#1e1c1c"/><circle cx="992.200" cy="341" r="1.200" fill="#b8b8bc"/><path d="M992 353v3.500" stroke="#2a2828" stroke-width="1"/>
<ellipse cx="980.300" cy="357.500" rx="3.600" ry="1.500" fill="#7a1c24"/><path d="M974.500 346.300h3.800M982.800 346.300h3.800" stroke="#6a4a40" stroke-width="1.100"/><path d="M980 348v5" stroke="#a87c6e" stroke-width="1.200"/>
<!-- youtube control bar -->
<rect x="376" y="630" width="640" height="38.500" fill="url(#gCtl)"/>
<rect x="382" y="650" width="627" height="1" fill="#d8d8d8" opacity=".45"/><rect x="382" y="650" width="118" height="1" fill="#e8e8e8" opacity=".5"/><rect x="382" y="650" width="100" height="1.100" fill="#f00"/>
<g fill="#fff"><rect x="390.500" y="656.300" width="2.400" height="7.200"/><rect x="395" y="656.300" width="2.400" height="7.200"/><path d="M411 656.800l4.500 3.100-4.500 3.100zM416 656.800h1.300v6.200H416z"/><path d="M427 658.300h2l3-2.600v8.600l-3-2.600h-2z"/></g><path d="M433.500 657.600a3 3 0 0 1 0 4.800M434.800 655.600a5.500 5.500 0 0 1 0 8.800" fill="none" stroke="#fff" stroke-width=".900"/>
<text x="443.600" y="662" font-size="5.500" fill="#e4e4e4" textLength="39.500" lengthAdjust="spacingAndGlyphs">9:51 / 1:01:50</text>
<g fill="none" stroke="#fff"><circle cx="946.500" cy="660" r="2.200" stroke-width="2" stroke-dasharray="1.300 .900"/><circle cx="946.500" cy="660" r="1.600" stroke-width="1.200"/><rect x="961.500" y="656.500" width="8.500" height="7" stroke-width="1"/><rect x="978.800" y="657" width="9" height="6" stroke-width="1"/><path d="M997.500 659v-2.500h2.500M1001.500 656.500h2.500v2.500M1004 661v2.500h-2.500M1000 663.500h-2.500v-2.500" stroke-width="1.100"/></g><rect x="965.500" y="660" width="3.500" height="2.700" fill="#fff"/><circle cx="951.200" cy="662.200" r="1.100" fill="#e03030"/>
</svg>
<!-- related videos sidebar -->
<div class="a" style="left:941px;top:370px;width:76.200px;height:43.100px;background:#000"></div>
<div class="a" style="left:1028px;top:327px;width:84px;height:46.500px;background:#fff;overflow:hidden"><svg class="i" style="left:0;top:0" width="84" height="46.500" viewBox="0 0 84 46.500"><text x="8" y="7.800" font-size="3.300" fill="#444" font-family="Liberation Sans,sans-serif">AFL GPS Reference Ellipse</text><circle cx="20" cy="19" r="8.800" fill="#1f3a2a"/><path d="M15 21l4-3 2 3" fill="#e8e8e8"/><path d="M20 27l3-13" stroke="#c22" stroke-width="1"/><circle cx="20" cy="19" r="8.800" fill="none" stroke="#3a6a4a" stroke-width=".800"/><path d="M28 14l-3 12" stroke="#c44" stroke-width=".400"/><ellipse cx="60" cy="20.500" rx="8.300" ry="6.800" fill="#f03a1a" stroke="#222" stroke-width=".900"/><path d="M52 20.500h16M60 14v13" stroke="#8a1a0a" stroke-width=".400"/><path d="M66 14l4-4M68 16l3-3" stroke="#e66" stroke-width=".500"/><g stroke="#999" stroke-width=".600"><path d="M7 31.500h20M7 33.500h32M46 30.500h30M46 32.500h34M46 34.500h32M46 36.500h24M46 38.500h18"/></g><path d="M2 45h80" stroke="#bbb" stroke-width=".500" stroke-dasharray="3 .700"/></svg></div>
<div class="a" style="left:1089.7px;top:364.3px;width:20.5px;height:7.800px;background:rgba(18,18,18,.88)"></div>
<span class="t" style="left:1091.5px;top:365.07px;font-size:6.3px;line-height:6.3px;color:#f0f0f0;font-weight:bold;letter-spacing:0.198px;">21:51</span>
<span class="t" style="left:1116.4px;top:329.19px;font-size:7.1px;line-height:7.1px;color:#111;font-weight:bold;letter-spacing:-0.331px;">Reprojecting Sport Player GPS</span>
<span class="t" style="left:1116.4px;top:337.19px;font-size:7.1px;line-height:7.1px;color:#111;font-weight:bold;letter-spacing:-0.221px;">Tracking Data - Part 2</span>
<span class="t" style="left:1116.4px;top:346.93px;font-size:6.7px;line-height:6.7px;color:#686868;letter-spacing:-0.139px;">Andrew Simmons</span>
<span class="t" style="left:1116.4px;top:356.23px;font-size:6.7px;line-height:6.7px;color:#686868;letter-spacing:-0.176px;">41 views</span>
<div class="a" style="left:1028px;top:378px;width:84px;height:46.500px;background:#fff;overflow:hidden"><svg class="i" style="left:0;top:0" width="84" height="46.500" viewBox="0 0 84 46.500"><path d="M8 3.500h16" stroke="#bbb" stroke-width=".800"/><path d="M28 3.500h48M28 6.500h9" stroke="#777" stroke-width="1"/><rect x="6" y="10" width="19" height="34" fill="#6a8a58"/><rect x="6" y="10" width="19" height="17" fill="#4e7a4a"/><circle cx="15.500" cy="18.500" r="7" fill="#2f6a3a" stroke="#d8dcd8" stroke-width="1.200"/><rect x="6" y="27.500" width="19" height="16.500" fill="#9a9c90"/><ellipse cx="15.500" cy="35.800" rx="8" ry="7" fill="#d8dcd8"/><ellipse cx="15.500" cy="35.800" rx="5.600" ry="4.800" fill="#4aba4a"/><circle cx="15" cy="17.500" r=".800" fill="#e33"/><circle cx="15.500" cy="34.500" r=".800" fill="#e33"/><g stroke="#9a9a9a" stroke-width=".450" stroke-dasharray="2.200 .500 1.300 .400 3 .500"><path d="M29 13h42M29 15h40M29 17h30M29 20h40M29 22h43M29 24h36M29 26h26M29 28h8M29 31h44M29 33h40M29 35h38M29 37h34M29 39h30M29 41h10"/></g></svg></div>
<div class="a" style="left:1093.7px;top:415.3px;width:16.5px;height:7.800px;background:rgba(18,18,18,.88)"></div>
<span class="t" style="left:1095.5px;top:416.07px;font-size:6.3px;line-height:6.3px;color:#f0f0f0;font-weight:bold;letter-spacing:0.097px;">6:00</span>
<span class="t" style="left:1116.4px;top:380.19px;font-size:7.1px;line-height:7.1px;color:#111;font-weight:bold;letter-spacing:-0.331px;">Reprojecting Sport Player GPS</span>
<span class="t" style="left:1116.4px;top:388.19px;font-size:7.1px;line-height:7.1px;color:#111;font-weight:bold;letter-spacing:-0.245px;">Tracking Data - Part 1</span>
<span class="t" style="left:1116.4px;top:397.93px;font-size:6.7px;line-height:6.7px;color:#686868;letter-spacing:-0.139px;">Andrew Simmons</span>
<span class="t" style="left:1116.4px;top:407.23px;font-size:6.7px;line-height:6.7px;color:#686868;letter-spacing:-0.176px;">90 views</span>
<div class="a" style="left:1028px;top:429px;width:84px;height:46.500px;overflow:hidden;background:linear-gradient(90deg,#9a6a55 0,#a87860 30%,#c8d4cc 42%,#dce6e0 70%,#d0dcd8)"><div class="a" style="left:0;top:0;width:36px;height:30px;background:linear-gradient(160deg,#8a94a2,#b0624a 60%,#a86a50)"></div><div class="a" style="left:3px;top:2px;width:38px;height:9px;border-radius:4px;background:#8f9aa8;transform:rotate(8deg)"></div><div class="a" style="left:10px;top:1px;width:10px;height:9px;border-radius:5px;background:#7aa6c8"></div><div class="a" style="left:33px;top:7px;width:6px;height:30px;background:#8a929c"></div><div class="a" style="left:0;top:36px;width:84px;height:11px;background:linear-gradient(#cdcdd8,#b8b8c6)"></div><div class="a" style="left:36px;top:28px;width:16px;height:7px;border-radius:3px;background:#6a7684"></div><div class="a" style="left:7px;top:29px;width:7.500px;height:11px;background:#1a1a22"></div><div class="a" style="left:.500px;top:28px;width:6.500px;height:3.800px;background:#2444c8;box-shadow:0 3.800px #1f8a30,0 7.600px #dcc41e,0 11.400px #c41e1e"></div><div class="a" style="left:49px;top:31px;width:35px;height:4.500px;background:#3a3a46"></div><div class="a" style="left:58px;top:42.500px;width:26px;height:4px;background:#2a2a32"></div><div class="a" style="left:70px;top:23px;width:9px;height:2px;background:#3a5ad0"></div></div>
<div class="a" style="left:1093.7px;top:466.3px;width:16.5px;height:7.800px;background:rgba(18,18,18,.88)"></div>
<span class="t" style="left:1095.5px;top:467.07px;font-size:6.3px;line-height:6.3px;color:#f0f0f0;font-weight:bold;letter-spacing:0.097px;">1:51</span>
<span class="t" style="left:1116.4px;top:431.19px;font-size:7.1px;line-height:7.1px;color:#111;font-weight:bold;letter-spacing:-0.332px;">Robot arm stacking Lego Duplo</span>
<span class="t" style="left:1116.4px;top:439.19px;font-size:7.1px;line-height:7.1px;color:#111;font-weight:bold;letter-spacing:-0.441px;">bricks</span>
<span class="t" style="left:1116.4px;top:448.93px;font-size:6.7px;line-height:6.7px;color:#686868;letter-spacing:-0.139px;">Andrew Simmons</span>
<span class="t" style="left:1116.4px;top:458.23px;font-size:6.7px;line-height:6.7px;color:#686868;letter-spacing:-0.169px;">132 views</span>
<div class="a" style="left:1028px;top:480px;width:84px;height:46.500px;background:#fff;overflow:hidden"><svg class="i" style="left:0;top:0" width="84" height="46.500" viewBox="0 0 84 46.500"><g transform="rotate(-26 40 24)" stroke="#333" stroke-width=".800" stroke-dasharray="2.500 .800 1 .700"><path d="M14 18h30M16 22h34"/></g><path d="M29 33l24-11" stroke="#222" stroke-width=".900"/><path d="M29 33l3.500-.200-1.800-2z" fill="#222"/><g transform="rotate(-42 60 15)"><rect x="49" y="12.500" width="15" height="4.400" fill="#f8a81a"/><rect x="64" y="12.500" width="4" height="4.400" fill="#f06a80"/><path d="M49 12.500l-4 2.200 4 2.200z" fill="#f0d8b0"/></g><g stroke="#444" stroke-width=".800" stroke-dasharray="2 .600 3 .700"><path d="M43 27.500h26M43 31.500h28M11 34h22M11 38.500h27"/></g></svg></div>
<div class="a" style="left:1089.7px;top:517.3px;width:20.5px;height:7.800px;background:rgba(18,18,18,.88)"></div>
<span class="t" style="left:1091.5px;top:518.07px;font-size:6.3px;line-height:6.3px;color:#f0f0f0;font-weight:bold;letter-spacing:0.198px;">23:56</span>
<span class="t" style="left:1116.4px;top:482.19px;font-size:7.1px;line-height:7.1px;color:#111;font-weight:bold;letter-spacing:-0.267px;">Spatio-Temporal Reference</span>
<span class="t" style="left:1116.4px;top:490.19px;font-size:7.1px;line-height:7.1px;color:#111;font-weight:bold;letter-spacing:-0.329px;">Frames as Geographic Objects</span>
<span class="t" style="left:1116.4px;top:499.93px;font-size:6.7px;line-height:6.7px;color:#686868;letter-spacing:-0.139px;">Andrew Simmons</span>
<span class="t" style="left:1116.4px;top:509.23px;font-size:6.7px;line-height:6.7px;color:#686868;letter-spacing:-0.176px;">46 views</span>
<div class="a" style="left:1028px;top:531px;width:84px;height:46.500px;overflow:hidden;background:linear-gradient(#3a1410 0,#5a2a20 22%,#6a3a2c 30%,#8a5a48 45%,#7a4a3a 62%,#6a4030 80%,#4a8a30 84%,#3aa030 100%)"><div class="a" style="left:0;top:-6px;width:84px;height:18px;background:radial-gradient(ellipse 14px 12px at 8px 8px,rgba(255,240,230,.9),rgba(255,240,230,0)),radial-gradient(ellipse 14px 12px at 78px 8px,rgba(255,240,230,.9),rgba(255,240,230,0))"></div><div class="a" style="left:3px;top:16px;width:64px;height:5px;background:repeating-linear-gradient(90deg,rgba(230,240,255,.95) 0,rgba(230,240,255,.95) 3px,rgba(160,150,160,.5) 3px,rgba(160,150,160,.5) 5px);filter:blur(1px)"></div><div class="a" style="left:64px;top:14px;width:15px;height:9px;background:#d8e8d0;border:.500px solid #889"></div><div class="a" style="left:0;top:26px;width:84px;height:1px;background:#4a2a22;box-shadow:0 4px #4a2a22,0 8px #503028"></div></div>
<div class="a" style="left:1093.7px;top:568.3px;width:16.5px;height:7.800px;background:rgba(18,18,18,.88)"></div>
<span class="t" style="left:1095.5px;top:569.07px;font-size:6.3px;line-height:6.3px;color:#f0f0f0;font-weight:bold;letter-spacing:0.097px;">2:59</span>
<span class="t" style="left:1116.4px;top:533.19px;font-size:7.1px;line-height:7.1px;color:#111;font-weight:bold;letter-spacing:-0.199px;">Three Minute Thesis 2017 -</span>
<span class="t" style="left:1116.4px;top:541.19px;font-size:7.1px;line-height:7.1px;color:#111;font-weight:bold;letter-spacing:-0.278px;">Sport Performance Analysis...</span>
<span class="t" style="left:1116.4px;top:550.93px;font-size:6.7px;line-height:6.7px;color:#686868;letter-spacing:-0.139px;">Andrew Simmons</span>
<span class="t" style="left:1116.4px;top:560.23px;font-size:6.7px;line-height:6.7px;color:#686868;letter-spacing:-0.169px;">144 views</span>
<div class="a" style="left:1028px;top:582px;width:84px;height:46.500px;background:#fff;overflow:hidden"><svg class="i" style="left:0;top:0" width="84" height="46.500" viewBox="0 0 84 46.500" font-family="Liberation Sans,sans-serif"><rect x="0" y="0" width="84" height="3" fill="#eee"/><path d="M2 1.500h14" stroke="#888" stroke-width=".700"/><rect x="3" y="7" width="64" height="38" fill="#fff" stroke="#e4e4e4" stroke-width=".600"/><rect x="69" y="4" width="15" height="30" fill="#f4f6f8"/><rect x="71" y="6" width="7" height="1.500" fill="#3a9ad8"/><rect x="78" y="10" width="5" height="8" fill="#dde"/><path d="M71 20h3M76 24h4M72 28h3M79 22h3" stroke="#9bd" stroke-width=".800"/><circle cx="14" cy="15.500" r="3" fill="#3a4250"/><text x="21" y="17" font-size="3.800" font-weight="bold" fill="#1a9a3a">National Challenges</text><g stroke="#777" stroke-width=".600"><path d="M21 20.500h14M21 22.500h36M21 24.500h12"/></g><path d="M11.500 29.500h5l-1 1.500h-3z" fill="#444"/><text x="21" y="32.500" font-size="3.800" font-weight="bold" fill="#1a9a3a">Regional Challenges</text><g stroke="#555" stroke-width=".700"><path d="M21 36.500h34M21 39h28"/></g></svg></div>
<div class="a" style="left:1093.7px;top:619.3px;width:16.5px;height:7.800px;background:rgba(18,18,18,.88)"></div>
<span class="t" style="left:1095.5px;top:620.07px;font-size:6.3px;line-height:6.3px;color:#f0f0f0;font-weight:bold;letter-spacing:0.097px;">2:53</span>
<span class="t" style="left:1116.4px;top:584.19px;font-size:7.1px;line-height:7.1px;color:#111;font-weight:bold;letter-spacing:-0.288px;">GovHack 2018 - EasyBuzz</span>
<span class="t" style="left:1116.4px;top:592.19px;font-size:7.1px;line-height:7.1px;color:#111;font-weight:bold;letter-spacing:-0.372px;">Parking</span>
<span class="t" style="left:1116.4px;top:601.93px;font-size:6.7px;line-height:6.7px;color:#686868;letter-spacing:-0.139px;">Andrew Simmons</span>
<span class="t" style="left:1116.4px;top:611.23px;font-size:6.7px;line-height:6.7px;color:#686868;letter-spacing:-0.176px;">71 views</span>
<div class="a" style="left:1028px;top:633px;width:84px;height:46.500px;background:#fff;overflow:hidden"><svg class="i" style="left:0;top:0" width="84" height="46.500" viewBox="0 0 84 46.500"><g stroke="#777" stroke-width=".800" stroke-dasharray="3 .700 5 .600"><path d="M8 5h58M8 9.500h44"/></g><rect x="12" y="17" width="23" height="20.500" fill="#5a6258"/><ellipse cx="23.500" cy="27.500" rx="9" ry="7.500" fill="#4e5a48" stroke="#8a8f88" stroke-width="1.300"/><path d="M20 28h7" stroke="#c84" stroke-width=".500"/><path d="M36 27.500h8" stroke="#3a6ad0" stroke-width="1.600"/><path d="M43 25l4 2.500-4 2.500z" fill="#3a6ad0"/><g fill="#f4b8c8" opacity=".6"><circle cx="56" cy="22" r=".700"/><circle cx="60" cy="26" r=".700"/><circle cx="54" cy="30" r=".700"/><circle cx="62" cy="31" r=".700"/><circle cx="58" cy="34" r=".700"/><circle cx="52" cy="25" r=".700"/><circle cx="63" cy="21" r=".700"/></g><path d="M44 42.500h16" stroke="#bbb" stroke-width=".600"/></svg></div>
<div class="a" style="left:1089.7px;top:670.3px;width:20.5px;height:7.800px;background:rgba(18,18,18,.88)"></div>
<span class="t" style="left:1091.5px;top:671.07px;font-size:6.3px;line-height:6.3px;color:#f0f0f0;font-weight:bold;letter-spacing:0.198px;">12:12</span>
<span class="t" style="left:1116.4px;top:635.19px;font-size:7.1px;line-height:7.1px;color:#111;font-weight:bold;letter-spacing:-0.331px;">Reprojecting Sport Player GPS</span>
<span class="t" style="left:1116.4px;top:643.19px;font-size:7.1px;line-height:7.1px;color:#111;font-weight:bold;letter-spacing:-0.221px;">Tracking Data - Part 3</span>
<span class="t" style="left:1116.4px;top:652.93px;font-size:6.7px;line-height:6.7px;color:#686868;letter-spacing:-0.139px;">Andrew Simmons</span>
<span class="t" style="left:1116.4px;top:662.23px;font-size:6.7px;line-height:6.7px;color:#686868;letter-spacing:-0.176px;">39 views</span>
<div class="a" style="left:1028px;top:684px;width:84px;height:46.500px;overflow:hidden;background:linear-gradient(90deg,#7a8a4a,#9a8a5a 35%,#8a7a5a 50%,#9ab0b8 75%,#b8c4c0)"><div class="a" style="left:-2px;top:14px;width:26px;height:38px;border-radius:12px 14px 4px 8px;background:#f4e0d4"></div><div class="a" style="left:0;top:10px;width:20px;height:12px;border-radius:8px 10px 2px 2px;background:#7a4a30"></div><div class="a" style="left:12px;top:30px;width:6px;height:9px;border-radius:3px;background:#b02030"></div><div class="a" style="left:18px;top:30px;width:16px;height:17px;border-radius:8px 2px 0 0;background:#f6f2ee"></div><div class="a" style="left:50px;top:0;width:32px;height:26px;border-radius:12px 16px 8px 8px;background:#2a62c8"></div><div class="a" style="left:72px;top:4px;width:10px;height:18px;border-radius:5px;background:#4a82e0"></div><div class="a" style="left:58px;top:14px;width:15px;height:17px;border-radius:7px;background:#d8a890"></div><div class="a" style="left:58.500px;top:16px;width:14px;height:3.500px;border-radius:1.500px;background:#111"></div><div class="a" style="left:63.500px;top:21.500px;width:4px;height:3px;border-radius:2px;background:#111"></div><div class="a" style="left:44px;top:30px;width:40px;height:17px;border-radius:14px 10px 0 0;background:#2848b0"></div><div class="a" style="left:60px;top:30px;width:12px;height:17px;background:#181c28"></div><div class="a" style="left:24px;top:4.500px;width:19px;height:18px;background:#2a1a5a;border:1.500px solid #9ad8f0;transform:rotate(-8deg)"></div><span class="t" style="left:26.500px;top:7.500px;font-size:11px;line-height:11px;font-weight:bold;color:#e8f0ff;letter-spacing:-.300px;transform:rotate(-8deg)">Ps</span><svg class="i" style="left:28px;top:22px" width="22" height="12" viewBox="0 0 22 12"><path d="M0 1l12 2.500 1-3 9 6.500-11 5 1-3.200-12-3.800z" fill="#e81a1a"/></svg></div>
<div class="a" style="left:1089.7px;top:721.3px;width:20.5px;height:7.800px;background:rgba(18,18,18,.88)"></div>
<span class="t" style="left:1091.5px;top:722.07px;font-size:6.3px;line-height:6.3px;color:#f0f0f0;font-weight:bold;letter-spacing:0.198px;">10:10</span>
<span class="t" style="left:1116.4px;top:685.99px;font-size:7.1px;line-height:7.1px;color:#111;font-weight:bold;letter-spacing:-0.334px;">absolutely awful PHOTOSHOPS</span>
<span class="t" style="left:1116.4px;top:695.63px;font-size:6.7px;line-height:6.7px;color:#686868;letter-spacing:-0.213px;">LazarBeam</span>
<span class="t" style="left:1116.4px;top:705.03px;font-size:6.7px;line-height:6.7px;color:#686868;letter-spacing:-0.106px;">3.6M views</span>
<div class="a" style="left:1152.4px;top:695.6px;width:5px;height:5px;border-radius:3px;background:#8a8a8a"></div><svg class="i" style="left:1153.4px;top:696.8px" width="3" height="3" viewBox="0 0 3 3"><path d="M.300 1.500l.900 .900 1.500-1.800" stroke="#fff" stroke-width=".600" fill="none"/></svg>
<div class="a" style="left:1028px;top:735px;width:84px;height:27px;overflow:hidden;background:radial-gradient(ellipse 40px 34px at 42px 20px,#20142c,#0a0818 70%,#06060e)"><div class="a" style="left:28px;top:6px;width:24px;height:16px;border-radius:12px 12px 4px 4px;background:#2a1a28"></div><div class="a" style="left:28px;top:7px;width:12px;height:14px;border-radius:8px 4px 2px 6px;background:#d02a58"></div><div class="a" style="left:33px;top:12px;width:15px;height:19px;border-radius:7px;background:#8a6a88"></div><div class="a" style="left:35px;top:16.500px;width:4px;height:1.200px;background:#221;box-shadow:6.500px 0 #221"></div><div class="a" style="left:37.500px;top:24px;width:6px;height:1.200px;background:#4a2a3a"></div></div>
<span class="t" style="left:1116.4px;top:736.99px;font-size:7.1px;line-height:7.1px;color:#111;font-weight:bold;letter-spacing:-0.349px;">Basically I'm Gay</span>
<span class="t" style="left:1116.4px;top:746.63px;font-size:6.7px;line-height:6.7px;color:#686868;letter-spacing:-0.141px;">Daniel Howell</span>
<span class="t" style="left:1116.4px;top:756.03px;font-size:6.7px;line-height:6.7px;color:#686868;letter-spacing:-0.106px;">3.3M views</span>
<div class="a" style="left:1159.1px;top:746.6px;width:5px;height:5px;border-radius:3px;background:#8a8a8a"></div><svg class="i" style="left:1160.1px;top:747.8px" width="3" height="3" viewBox="0 0 3 3"><path d="M.300 1.500l.900 .900 1.500-1.800" stroke="#fff" stroke-width=".600" fill="none"/></svg>
<div class="a" style="left:1116.300px;top:712.200px;width:15.600px;height:7.400px;background:#eeeeee;border-radius:1px"></div>
<span class="t" style="left:1118.6px;top:713.50px;font-size:5.2px;line-height:5.2px;color:#666;font-weight:bold;letter-spacing:0.164px;">New</span>
<div class="a" style="left:310px;top:762px;width:960px;height:8px;background:#000"></div>
</div></div><!-- /canvas -->
<div class="a" style="left:1919px;top:115px;width:1px;height:780px;background:#c9c6c1"></div>
<!-- blue selection/resize line -->
<div class="a" style="left:136px;top:895px;width:1784px;height:5px;background:#308cc6"></div>
<!-- horizontal scrollbar -->
<div class="a" style="left:136px;top:935.500px;width:1784px;height:15px;background:#e2e0dc;border-top:1px solid #bab7b2;border-bottom:1px solid #bab7b2"></div>
<div class="a" style="left:150px;top:936.500px;width:1395.500px;height:13px;background:linear-gradient(#fefefe,#f6f3f0);border-left:1px solid #bab7b2;border-right:1px solid #bab7b2"></div>
<div class="a" style="left:136px;top:936.500px;width:14px;height:13px;background:#f4f2ef"></div>
<div class="a" style="left:1906px;top:936.500px;width:14px;height:13px;background:#f4f2ef;border-left:1px solid #bab7b2"></div>
<svg class="i" style="left:139.500px;top:939.500px" width="5" height="8" viewBox="0 0 5 8"><path d="M5 0v8L0 4z" fill="#3a3a38"/></svg>
<svg class="i" style="left:1910.500px;top:939.500px" width="5" height="8" viewBox="0 0 5 8"><path d="M0 0v8l5-4z" fill="#3a3a38"/></svg>
<div class="a" style="left:1021.500px;top:953px;width:1px;height:1px;background:#b4b0aa;box-shadow:3px 0 #b4b0aa,6px 0 #b4b0aa,9px 0 #b4b0aa,12px 0 #b4b0aa,15px 0 #b4b0aa"></div>
<!-- colour tool bar -->
<span class="t" style="left:139.5px;top:959.50px;font-size:15px;line-height:15px;color:#0a0a0a;letter-spacing:0.131px;">Colors: <u>K</u>olourPaint Defaults</span>
<svg class="i" style="left:1906px;top:960px" width="12" height="12" viewBox="0 0 12 12"><rect x=".700" y="2.800" width="8" height="8" rx="2" fill="#efebe7" stroke="#5a5955" stroke-width="1"/><rect x="3.300" y=".700" width="8" height="8" rx="2" fill="#efebe7" stroke="#5a5955" stroke-width="1"/><rect x="5" y="4.200" width="4.500" height="1" fill="#5a5955"/></svg>
<!-- fg/bg swatch -->
<div class="a" style="left:140px;top:990px;width:52px;height:52px;background:#fff;border-top:1px solid #a5a29c;border-left:1px solid #a5a29c"></div>
<div class="a" style="left:151px;top:991px;width:10px;height:5.500px;background:#e0e0e0"></div><div class="a" style="left:171.500px;top:991px;width:9px;height:10px;background:#e0e0e0"></div>
<div class="a" style="left:141px;top:1001px;width:8px;height:9.600px;background:#e0e0e0"></div><div class="a" style="left:183px;top:1001px;width:8px;height:9.600px;background:#e0e0e0"></div>
<div class="a" style="left:141px;top:1021px;width:9.700px;height:9.700px;background:#e0e0e0"></div><div class="a" style="left:183px;top:1021px;width:8px;height:9.700px;background:#e0e0e0"></div>
<div class="a" style="left:151px;top:1031.400px;width:10px;height:9.200px;background:#e0e0e0"></div><div class="a" style="left:171.500px;top:1031.400px;width:9.500px;height:9.200px;background:#e0e0e0"></div>
<div class="a" style="left:158px;top:1008px;width:25px;height:25px;background:#fff;border-right:2px solid #a5a29c;border-bottom:2px solid #a5a29c"></div>
<div class="a" style="left:149px;top:999px;width:25px;height:25px;background:#000;border-right:2px solid #a5a29c;border-bottom:2px solid #a5a29c"></div>
<svg class="i" style="left:174px;top:990px" width="18" height="18" viewBox="0 0 18 18"><path d="M5 5.300h5.500q1.800 0 1.800 1.800v5" fill="none" stroke="#000" stroke-width="1.300"/><path d="M6.200 1L1.400 5.300 6.200 9.600zM8 12h8.800L12.400 17z" fill="#000"/></svg>
<!-- transparent colour cell -->
<div class="a" style="left:231.500px;top:990px;width:27px;height:27px;border-top:1px solid #a5a29c;border-left:1px solid #a5a29c;background-color:#fff;background-image:linear-gradient(45deg,#d2d2d2 25%,transparent 25%,transparent 75%,#d2d2d2 75%),linear-gradient(45deg,#d2d2d2 25%,transparent 25%,transparent 75%,#d2d2d2 75%);background-size:5px 5px;background-position:0 0,2.500px 2.500px"></div>
<svg class="i" style="left:233px;top:990px" width="24" height="28" viewBox="233 990 24 28"><path d="M244.800 991.300L234.500 1011.400l10.300 5.100 9.800-5.100z" fill="#9cc0f0" fill-opacity=".85"/><path d="M234.500 1011.400l10.300-4.800 9.800 4.800-9.800 5.100z" fill="#4a94ea"/><path d="M244.800 991.300L234.500 1011.400l10.300 5.100 9.800-5.100zM244.800 991.300v25.200M234.500 1011.400l10.300-4.800 9.800 4.800" fill="none" stroke="#1638a8" stroke-width="1" stroke-linejoin="round"/></svg>
<!-- palette -->
<div class="a" style="left:264px;top:990px;width:287px;height:53px;background:#d9d6d0"></div>
<div class="a" style="left:265px;top:991px;width:285px;height:51px;font-size:0;line-height:0">
<i style="display:block;position:absolute;left:0;top:0;width:25px;height:25px;background:#000"></i><i style="display:block;position:absolute;left:26px;top:0;width:25px;height:25px;background:#808080"></i><i style="display:block;position:absolute;left:52px;top:0;width:25px;height:25px;background:#ff0000"></i><i style="display:block;position:absolute;left:78px;top:0;width:25px;height:25px;background:#ff8000"></i><i style="display:block;position:absolute;left:104px;top:0;width:25px;height:25px;background:#ffff00"></i><i style="display:block;position:absolute;left:130px;top:0;width:25px;height:25px;background:#00ff00"></i><i style="display:block;position:absolute;left:156px;top:0;width:25px;height:25px;background:#00ffff"></i><i style="display:block;position:absolute;left:182px;top:0;width:25px;height:25px;background:#0000ff"></i><i style="display:block;position:absolute;left:208px;top:0;width:25px;height:25px;background:#ff00ff"></i><i style="display:block;position:absolute;left:234px;top:0;width:25px;height:25px;background:#ff8080"></i><i style="display:block;position:absolute;left:260px;top:0;width:25px;height:25px;background:#80ff80"></i>
<i style="display:block;position:absolute;left:0;top:26px;width:25px;height:25px;background:#fff"></i><i style="display:block;position:absolute;left:26px;top:26px;width:25px;height:25px;background:#c0c0c0"></i><i style="display:block;position:absolute;left:52px;top:26px;width:25px;height:25px;background:#800000"></i><i style="display:block;position:absolute;left:78px;top:26px;width:25px;height:25px;background:#804000"></i><i style="display:block;position:absolute;left:104px;top:26px;width:25px;height:25px;background:#808000"></i><i style="display:block;position:absolute;left:130px;top:26px;width:25px;height:25px;background:#008000"></i><i style="display:block;position:absolute;left:156px;top:26px;width:25px;height:25px;background:#008080"></i><i style="display:block;position:absolute;left:182px;top:26px;width:25px;height:25px;background:#000080"></i><i style="display:block;position:absolute;left:208px;top:26px;width:25px;height:25px;background:#800080"></i><i style="display:block;position:absolute;left:234px;top:26px;width:25px;height:25px;background:#8080ff"></i><i style="display:block;position:absolute;left:260px;top:26px;width:25px;height:25px;background:#ffff80"></i>
</div>
<!-- colour similarity cube -->
<svg class="i" style="left:609px;top:996px" width="41" height="41" viewBox="609 996 41 41"><path d="M610 1012.700L625.500 997h23L632.300 1012.700z" fill="#c00000"/><path d="M610 1012.700h22.300v22.500H610z" fill="#00c000"/><path d="M632.300 1012.700L648.500 997v22.500L632.300 1035.200z" fill="#0000c0"/></svg>
<!-- status bar -->
<div class="a" style="left:67px;top:1056px;width:1853px;height:24px;background:#efebe7"></div>
<span class="t" style="left:69.5px;top:1061.70px;font-size:15px;line-height:15px;color:#0a0a0a;letter-spacing:-0.019px;">Rectangle: Right click to cancel.</span>
<span class="t" style="left:1414.5px;top:1062.00px;font-size:15px;line-height:15px;color:#0a0a0a;letter-spacing:-0.125px;">326,192 - 2436,410</span>
<span class="t" style="left:1596px;top:1062.00px;font-size:15px;line-height:15px;color:#0a0a0a;letter-spacing:0.404px;">2111x219</span>
<span class="t" style="left:1699.5px;top:1062.00px;font-size:15px;line-height:15px;color:#0a0a0a;letter-spacing:-0.108px;">4480 x 1560</span>
<span class="t" style="left:1806px;top:1062.00px;font-size:15px;line-height:15px;color:#0a0a0a;letter-spacing:0.195px;">32bpp</span>
<span class="t" style="left:1876px;top:1062.00px;font-size:15px;line-height:15px;color:#0a0a0a;letter-spacing:-0.516px;">50%</span>
</body></html>
